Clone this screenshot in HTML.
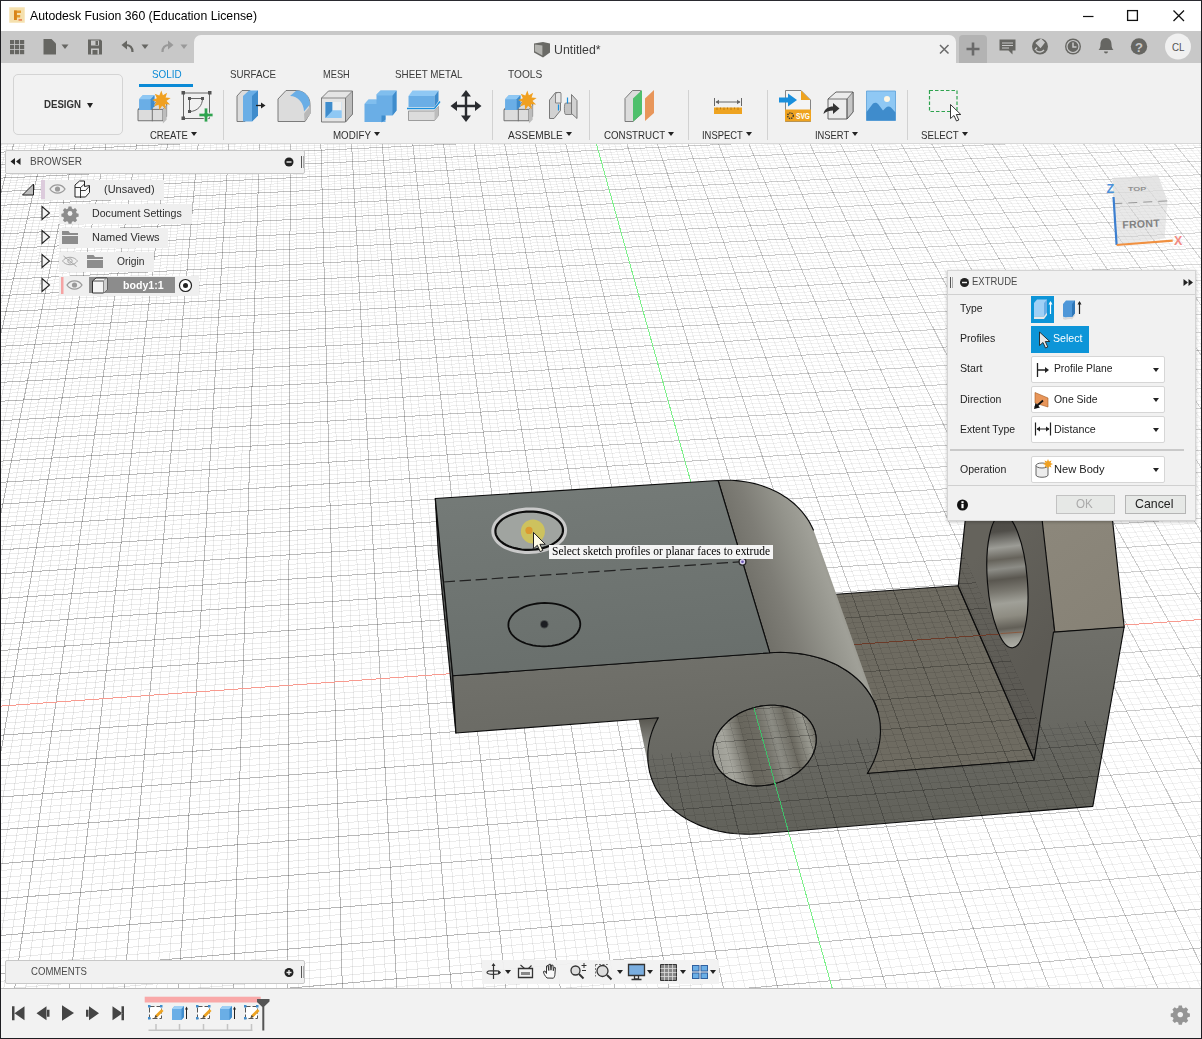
<!DOCTYPE html>
<html><head><meta charset="utf-8"><title>Autodesk Fusion 360 (Education License)</title>
<style>
*{box-sizing:border-box;margin:0;padding:0}
html,body{width:1202px;height:1039px;overflow:hidden;background:#fff}
body{position:relative;font-family:"Liberation Sans",sans-serif;color:#333;font-size:12px}
.abs{position:absolute}
#frame{position:absolute;left:0;top:0;width:1202px;height:1039px;border:1px solid #1e1e22;border-top-color:#2a2a30;z-index:50;pointer-events:none}
#title{position:absolute;left:1px;top:1px;width:1200px;height:30px;background:#fff}
#title .t{position:absolute;left:29px;top:7px;font-size:13.3px;color:#000;letter-spacing:-0.02px;white-space:nowrap}
#qat{position:absolute;left:1px;top:31px;width:1200px;height:32px;background:#c8c8c8}
#tab{position:absolute;left:193px;top:4px;width:762px;height:28px;background:#f1f1f1;border-radius:7px 7px 0 0}
#tab .n{position:absolute;left:360.5px;top:7px;font-size:13px;color:#3c3c3c;white-space:nowrap}
#plus{position:absolute;left:958px;top:4px;width:28px;height:28px;background:#b3b3b3;border-radius:4px 4px 0 0}
#ribbon{position:absolute;left:1px;top:63px;width:1200px;height:81px;background:#f1f1f1;border-bottom:1px solid #d8d8d8}
.rt{position:absolute;top:5px;font-size:12px;color:#3c3c3c;white-space:nowrap;letter-spacing:-0.1px}
.rl{position:absolute;top:66px;font-size:12px;color:#2e2e2e;white-space:nowrap;letter-spacing:-0.1px}
.rl i{display:inline-block;width:0;height:0;border-left:3.5px solid transparent;border-right:3.5px solid transparent;border-top:5px solid #222;margin-left:4px;vertical-align:2px}
.sep{position:absolute;top:27px;width:1px;height:50px;background:#d2d2d2}
#design{position:absolute;left:12px;top:11px;width:110px;height:61px;border:1px solid #d4d4d4;border-radius:5px;background:#f2f2f2}
#design span{position:absolute;left:30px;top:23px;font-size:12px;font-weight:bold;color:#333;letter-spacing:-0.1px;white-space:nowrap}
#design i{position:absolute;left:72.5px;top:27.5px;width:0;height:0;border-left:3.5px solid transparent;border-right:3.5px solid transparent;border-top:5px solid #222}
#canvas{position:absolute;left:1px;top:144px;width:1200px;height:845px;background:#fff;overflow:hidden}
#timeline{position:absolute;left:1px;top:988px;width:1200px;height:50px;background:#f2f2f2;border-top:1px solid #bdbdbd}
.panelhdr{position:absolute;background:#f1f1f1;border:1px solid #c8c8c8;border-radius:2px;font-size:12px;color:#4a4a4a}
.brow{position:absolute;height:20px;background:#efefef;font-size:12px;color:#2d2d2d;white-space:nowrap}
.brow span{position:absolute;top:3px}
#dlg{position:absolute;left:946px;top:126px;width:251px;height:252px;background:#f1f1f1;border:1px solid #d4d4d4;box-shadow:0 1px 3px rgba(0,0,0,.25);font-size:12px;color:#222}
#dlg .lb{position:absolute;left:12px;white-space:nowrap}
#dlg .dd{position:absolute;left:83px;width:134px;height:27px;background:#fff;border:1px solid #d6d6d6;border-radius:2px}
#dlg .dd span{position:absolute;left:22px;top:5px;white-space:nowrap}
#dlg .dd i{position:absolute;right:5.500px;top:11px;width:0;height:0;border-left:3px solid transparent;border-right:3px solid transparent;border-top:4.500px solid #222}
.btn{position:absolute;height:20px;border:1px solid #b5b5b5;background:#e6e8e6;font-size:13px;text-align:center;line-height:18px;color:#222}
svg{position:absolute;left:0;top:0;overflow:visible}
</style></head><body>
<div id="title">
<svg width="30" height="30" style="left:8px;top:6px"><rect x="0" y="0" width="16" height="16" rx="1" fill="#f8e9c4"/><rect x="1" y="1" width="14" height="14" rx="1" fill="#f5e0ae"/><path d="M5 3.500h7v2.600H7.800v2h3.400v2.400H7.800V13H5z" fill="#e39a2c"/><path d="M5 3.500h2.800v9.500H5z" fill="#d98418"/><rect x="9.500" y="12" width="3.500" height="1.800" fill="#e98a5a"/></svg>
<svg width="120" height="30" style="left:1080px;top:0"><path d="M2 15.500h10.500" stroke="#111" stroke-width="1.200"/><rect x="46.6" y="9.6" width="9.8" height="9.8" fill="none" stroke="#111" stroke-width="1.3"/><path d="M92.5 9.5l10.5 10.5M103 9.500l-10.500 10.500" stroke="#111" stroke-width="1.3"/></svg>
</div>
<div id="qat">
<svg width="195" height="32"><g fill="#666662">
<rect x="9" y="9" width="4.200" height="4.200"/><rect x="14" y="9" width="4.200" height="4.200"/><rect x="19" y="9" width="4.200" height="4.200"/>
<rect x="9" y="14" width="4.200" height="4.200"/><rect x="14" y="14" width="4.200" height="4.200"/><rect x="19" y="14" width="4.200" height="4.200"/>
<rect x="9" y="19" width="4.200" height="4.200"/><rect x="14" y="19" width="4.200" height="4.200"/><rect x="19" y="19" width="4.200" height="4.200"/>
<path d="M42.500 8h8l4.500 4.500V23.500H42.500z"/><path d="M60.500 13.500h7l-3.500 4.500z"/>
<path d="M87 8.500h12.500l1.500 1.500V23.500H87z"/></g>
<rect x="90" y="9.500" width="8" height="5" fill="#c8c8c8"/><rect x="94.500" y="10" width="2.500" height="4" fill="#666662"/><rect x="90" y="17.500" width="8" height="6" fill="#c8c8c8"/><rect x="91.500" y="19" width="5" height="4.500" fill="#666662"/>
<path d="M131.500 21c0-5-3-7-7-7h-2" fill="none" stroke="#666662" stroke-width="2.200"/><path d="M126 9.500l-5.500 4.500 5.500 4.500z" fill="#666662"/><path d="M140.500 13.500h7l-3.500 4.500z" fill="#666662"/>
<path d="M161.500 21c0-5 3-7 7-7h2" fill="none" stroke="#999" stroke-width="2.200"/><path d="M167 9.500l5.500 4.500-5.500 4.500z" fill="#999"/><path d="M179.500 13.500h7l-3.500 4.500z" fill="#999"/>
</svg>
<div id="tab">
<svg width="30" height="28" style="left:338px;top:5px"><path d="M2 3.500l9-1.500 7 1.500v9l-7 5-9-5z" fill="#6a6a66"/><path d="M2.800 4.600l7.600 1v10l-7.600-4.400z" fill="#b4b4b0"/></svg>
<svg width="20" height="20" style="left:743px;top:6px"><path d="M3 4l8.500 8.500M11.500 4l-8.500 8.500" stroke="#6a6a6a" stroke-width="1.500"/></svg>
</div>
<div id="plus"><svg width="28" height="28"><path d="M14 7.500v13M7.500 14h13" stroke="#6a6a6a" stroke-width="2.600"/></svg></div>
<svg width="215" height="32" style="left:986px;top:0"><g fill="#666662">
<path d="M12.500 8.500h16v11h-3v4l-4-4h-9z"/>
<circle cx="53" cy="15.500" r="8"/>
<circle cx="86" cy="15.500" r="8"/>
<path d="M119 7c-4 0-5.500 3-5.500 6.500 0 3-1 4.500-2 5.500h15c-1-1-2-2.500-2-5.500 0-3.500-1.500-6.500-5.500-6.500zM117 20.500h4a2 2 0 0 1-4 0z"/>
<circle cx="152" cy="15.500" r="8.200"/></g>
<g stroke="#c8c8c8" stroke-width="1.200"><path d="M15 12h11M15 14.500h11M15 17h7"/></g>
<path d="M49.500 12l4.500-3.500 3 3-3.500 4.500zM50 16.500l-2 2.500" stroke="#c8c8c8" stroke-width="1.500" fill="#c8c8c8"/><path d="M57 19a5.500 5.500 0 0 1-8 .5" stroke="#c8c8c8" stroke-width="1.300" fill="none"/>
<circle cx="86" cy="15.500" r="6" fill="none" stroke="#c8c8c8" stroke-width="1.200"/><path d="M86 11.500v4.500h3.500" stroke="#c8c8c8" stroke-width="1.500" fill="none"/>
<text x="152" y="20.500" font-size="13" font-weight="bold" fill="#c8c8c8" text-anchor="middle" font-family="Liberation Sans, sans-serif">?</text>
<circle cx="191" cy="15.500" r="13" fill="#f0f0f0"/>
<text x="185" y="19.800" font-size="11.500" fill="#555" textLength="12.500" lengthAdjust="spacingAndGlyphs" font-family="Liberation Sans, sans-serif">CL</text>
</svg>
</div>
<div id="ribbon">
<div id="design"><i></i></div>
<div class="abs" style="left:138px;top:21px;width:54px;height:3px;background:#0a8ad6"></div>
<div class="sep" style="left:222px"></div><div class="sep" style="left:491px"></div><div class="sep" style="left:588px"></div><div class="sep" style="left:687px"></div><div class="sep" style="left:766px"></div><div class="sep" style="left:906px"></div>
<svg width="1200" height="81" viewBox="1 63 1200 81">
<defs>
<g id="newcomp"><path d="M0 17.500l4-3.500h9.500l4-3.500h9.500v13.500l-4 4H0z" fill="#dcdcdc" stroke="#6e6e6e" stroke-width=".9"/><path d="M13.500 14v14.500M0 17.500h23.500l3.500-3.500M23.500 17.500v11" fill="none" stroke="#6e6e6e" stroke-width=".9"/><path d="M23.500 17.500l3.500-4v13.500l-3.500 3.500z" fill="#bdbdbd"/><path d="M1 8l3.500-3.500h11v10l-3.500 3.500H1z" fill="#6aaee6"/><path d="M1 8l3.500-3.500h11L12 8z" fill="#8fc8f4"/><path d="M12 8l3.500-3.500v10L12 18z" fill="#3f8ccc"/><path d="M22 0l1.500 4.500 4-2.500-1.500 4.500 4.800.500-4 2.800 3.500 3.200-4.800-.3.800 4.800-3.500-3.300-2.800 3.800-.5-4.800-4.500 1.500 2.500-4-4.200-2 4.500-1.500-2-4.200 4.300 1.700z" fill="#f0a020"/></g>
</defs>
<use href="#newcomp" transform="translate(138 90.500) scale(1.06 1.08)"/>
<g fill="none" stroke="#666" stroke-width="1"><path d="M183.500 93h26v25.500h-26z"/><path d="M189.500 98.500h13c0 7-5 13-13 13z"/></g>
<g fill="#555"><rect x="181.500" y="91" width="3.500" height="3.500"/><rect x="208" y="91" width="3.500" height="3.500"/><rect x="181.500" y="116.500" width="3.500" height="3.500"/><rect x="188" y="97" width="3" height="3"/><rect x="201" y="97" width="3" height="3"/><rect x="188" y="110" width="3" height="3"/></g>
<path d="M199 113.200h5.200v-5.200h3.600v5.200h5.200v3.600h-5.200v5.200h-3.600v-5.200h-5.200z" fill="#2fa34f" stroke="#f1f1f1" stroke-width=".8"/>
<!-- press pull -->
<path d="M237 96l5-5.500h8v25.500l-5 5.500h-8z" fill="#dcdcdc" stroke="#6e6e6e" stroke-width=".9"/><path d="M243 96l6-5.500h9v25l-6 6h-9z" fill="#6aaee6"/><path d="M252 96l6-5.500v25l-6 6z" fill="#3f8ccc"/><path d="M256 105.500h6" stroke="#222" stroke-width="1.300"/><path d="M261 102.500l4.500 3-4.500 3z" fill="#222"/>
<!-- fillet -->
<path d="M278 99l8-8.500h10c8 0 14 6 14 14v9l-5 8h-27z" fill="#dcdcdc" stroke="#6e6e6e" stroke-width=".9"/><path d="M304 113.500l6-7v8l-5.500 7z" fill="#b8b8b8"/><path d="M290 96l6.500-5.500c8 0 13.500 6 13.500 14l-6 7c0-8-6-15.500-14-15.500z" fill="#6aaee6"/>
<!-- shell -->
<path d="M321.500 98l7-7h24v23l-7 8h-24z" fill="#e4e4e4" stroke="#6e6e6e" stroke-width=".9"/><path d="M345.500 98l7-7v23l-7 8z" fill="#bdbdbd" stroke="#6e6e6e" stroke-width=".7"/><path d="M321.500 98h24v24" fill="none" stroke="#6e6e6e" stroke-width=".8"/><path d="M325.500 102h16v16h-16z" fill="#8fc8f4"/><path d="M325.500 102h7v10l-7 6z" fill="#3f8ccc"/><path d="M332.500 102h9v8.500h-9z" fill="#f0f0f0"/><path d="M332.500 110.500h9v7.500h-16z" fill="#8fc8f4"/>
<!-- combine -->
<path d="M364.500 104l4-4.500h8v-5l4-4h16v20l-4 5h-7v6.500h-21z" fill="#6aaee6"/><path d="M392.500 95.500l4-5v20l-4 5zM381.500 115.500h4v4l-4 3z" fill="#3f8ccc"/><path d="M364.500 104l4-4.500h8v-5l4-4h16l-4 5h-16v8.500z" fill="#8fc8f4" opacity=".6"/>
<!-- offset -->
<path d="M408.500 96l4-5.500h26l-4 5.500z" fill="#8fc8f4"/><path d="M408.500 96h26v11h-26z" fill="#6aaee6"/><path d="M434.500 96l4-5.500v10.500l-4 6z" fill="#3f8ccc"/><path d="M408.500 111h26l4-4.500v9l-4 5h-26z" fill="#dcdcdc" stroke="#8a8a8a" stroke-width=".8"/><path d="M434.500 111l4-4.500v9l-4 5z" fill="#bdbdbd"/><path d="M407 108.500h27.500l5.500-7" fill="none" stroke="#1a8fdc" stroke-width="1.400"/>
<!-- move -->
<path d="M466 94v24M454 106h24" stroke="#2a2c30" stroke-width="2.400"/><path d="M466 90l5 6.500h-10zM466 122l5-6.500h-10zM450.500 106l6.500-5v10zM481.500 106l-6.500-5v10z" fill="#2a2c30"/>
<use href="#newcomp" transform="translate(504 90.500) scale(1.06 1.08)"/>
<!-- joint -->
<path d="M549.500 100l6-7.500h5v18l-6.500 8h-4.500z" fill="#d2d2d2" stroke="#6e6e6e" stroke-width=".9"/><path d="M555.500 93.500c2-1.500 5-1.500 5.500 0v9.500h-5.500z" fill="#e6e6e6" stroke="#6e6e6e" stroke-width=".8"/><path d="M571.500 94.500l5.500 6v18l-5.500-5z" fill="#d2d2d2" stroke="#6e6e6e" stroke-width=".9"/><path d="M565.500 103h6v11.500h-6c-1.500-.5-1.500-11 0-11.500z" fill="#c4c4c4" stroke="#6e6e6e" stroke-width=".8"/><path d="M558.500 104.500v6M567.500 97.500v6" stroke="#1a8fdc" stroke-width="1.200"/>
<!-- construct -->
<path d="M625 98.500l7.500-8h8v24l-7.500 7h-8z" fill="#dcdcdc" stroke="#6e6e6e" stroke-width=".9"/><path d="M633 98.500l9-8.500v24l-9 7.500z" fill="#4fc06c"/><path d="M645 98.500l9-8.500v23l-9 8z" fill="#e8965a"/>
<!-- inspect -->
<path d="M714 107.500h28v6.500h-28z" fill="#eea320"/><path d="M717 107.500v2.500M720.500 107.500v1.800M724 107.500v2.500M727.500 107.500v1.800M731 107.500v2.500M734.500 107.500v1.800M738 107.500v2.500" stroke="#b07410" stroke-width=".8"/><path d="M714.500 98v8M741.500 98v8M716 102h24" stroke="#666" stroke-width="1"/><path d="M715.500 102l3.500-2.200v4.400zM740.500 102l-3.500-2.200v4.400z" fill="#666"/>
<!-- insert svg -->
<path d="M785.500 90.500h15.500l9.500 9.500v21.500h-25z" fill="#f4f4f4" stroke="#777" stroke-width=".9"/><path d="M801 90.500l9.500 9.500h-9.500z" fill="#eea320"/><path d="M785 109.500h26v12h-26z" fill="#eea320"/><text x="796" y="119" font-size="8.500" font-weight="bold" fill="#fff" textLength="14" lengthAdjust="spacingAndGlyphs" font-family="Liberation Sans, sans-serif">SVG</text><circle cx="790.500" cy="115.700" r="2.800" fill="none" stroke="#333" stroke-width="1.300" stroke-dasharray="1.400 .9"/><path d="M779 97.500h9v-4l9 6.500-9 6.500v-4h-9z" fill="#1a8fdc"/>
<!-- derive -->
<path d="M828 99l8-7h17v20l-6 7h-19z" fill="#ececec" stroke="#555" stroke-width=".9"/><path d="M847 99l6-7v20l-6 7z" fill="#c6c6c6" stroke="#555" stroke-width=".7"/><path d="M828 99h19v20" fill="none" stroke="#555" stroke-width=".8"/><path d="M823.500 114c1-5.500 5-7.500 9.500-7.500v-3.500l6.500 5.500-6.500 5.500v-3.500c-3.500 0-6.500 .5-9.500 3.500z" fill="#333"/>
<!-- image -->
<path d="M866.500 91h29v29.500h-29z" fill="#8fc8f4"/><path d="M866.500 91h29v29.500h-29z" fill="none" stroke="#5a9fd8" stroke-width=".8"/><path d="M866.500 112l6.500-8.500c2-1.500 4-1 5.500 1l4.500 6 3-3c1.500-1.500 3.500-1.500 5 0l4.500 5v8h-29z" fill="#3f8ccc"/><circle cx="887" cy="99" r="3" fill="#fff7e4"/>
<!-- select -->
<path d="M929.500 90.500h27.500v21h-27.500z" fill="none" stroke="#2fa34f" stroke-width="1.200" stroke-dasharray="3.500 2"/><path d="M950.500 104.500v14l3.500-3 2.500 5.500 2.300-1-2.500-5.500h4.500z" fill="#fff" stroke="#222" stroke-width=".9"/>
</svg>
</div>
<div id="canvas"><svg width="1200" height="845" viewBox="1 144 1200 845">
<defs>
<linearGradient id="gTop" gradientUnits="userSpaceOnUse" x1="600" y1="485" x2="620" y2="670"><stop offset="0" stop-color="#747a77"/><stop offset="1" stop-color="#696f6c"/></linearGradient>
<linearGradient id="gFront" gradientUnits="userSpaceOnUse" x1="700" y1="655" x2="715" y2="835"><stop offset="0" stop-color="#70706a"/><stop offset=".5" stop-color="#696963"/><stop offset="1" stop-color="#62625b"/></linearGradient>
<linearGradient id="gCyl" gradientUnits="userSpaceOnUse" x1="745" y1="585" x2="852" y2="547"><stop offset="0" stop-color="#706f68"/><stop offset=".25" stop-color="#7e7d76"/><stop offset=".52" stop-color="#93938b"/><stop offset=".7" stop-color="#a0a098"/><stop offset=".86" stop-color="#8b897f"/><stop offset="1" stop-color="#77756b"/></linearGradient>
<linearGradient id="gHole" gradientUnits="userSpaceOnUse" x1="712" y1="760" x2="817" y2="731"><stop offset="0" stop-color="#9a9a92"/><stop offset=".16" stop-color="#a6a69e"/><stop offset=".34" stop-color="#68665d"/><stop offset=".48" stop-color="#6e6c63"/><stop offset=".62" stop-color="#8c8c84"/><stop offset=".76" stop-color="#6c6a61"/><stop offset=".9" stop-color="#98988f"/><stop offset="1" stop-color="#6a685f"/></linearGradient>
<linearGradient id="gHole2" gradientUnits="userSpaceOnUse" x1="1005" y1="515" x2="1010" y2="648"><stop offset="0" stop-color="#4c4a45"/><stop offset=".12" stop-color="#504e49"/><stop offset=".24" stop-color="#9c9c96"/><stop offset=".33" stop-color="#66635b"/><stop offset=".4" stop-color="#8c8c86"/><stop offset=".48" stop-color="#5a5750"/><stop offset=".57" stop-color="#7a7870"/><stop offset=".66" stop-color="#a0a098"/><stop offset=".76" stop-color="#8e8c82"/><stop offset=".85" stop-color="#625f57"/><stop offset=".93" stop-color="#9a9a92"/><stop offset="1" stop-color="#b0b0a8"/></linearGradient>
<linearGradient id="gB" gradientUnits="userSpaceOnUse" x1="1050" y1="525" x2="1120" y2="625"><stop offset="0" stop-color="#8c877b"/><stop offset="1" stop-color="#878276"/></linearGradient>
<linearGradient id="gA" gradientUnits="userSpaceOnUse" x1="960" y1="580" x2="1050" y2="640"><stop offset="0" stop-color="#65635c"/><stop offset="1" stop-color="#5c5a54"/></linearGradient>
</defs>
<linearGradient id="gMaj" gradientUnits="userSpaceOnUse" x1="200" y1="900" x2="1100" y2="150"><stop offset="0" stop-color="#000" stop-opacity=".29"/><stop offset=".42" stop-color="#000" stop-opacity=".25"/><stop offset=".85" stop-color="#000" stop-opacity=".19"/><stop offset="1" stop-color="#000" stop-opacity=".16"/></linearGradient>
<linearGradient id="gMin" gradientUnits="userSpaceOnUse" x1="200" y1="900" x2="1100" y2="150"><stop offset="0" stop-color="#000" stop-opacity=".085"/><stop offset=".42" stop-color="#000" stop-opacity=".065"/><stop offset=".85" stop-color="#000" stop-opacity=".05"/><stop offset="1" stop-color="#000" stop-opacity=".045"/></linearGradient>
<g shape-rendering="crispEdges" fill="none" stroke-width="1"><path stroke="url(#gMin)" d="M-3.7 140.0L-5.0 144.8M2.5 140.0L-5.0 167.7M8.6 140.0L-5.0 191.5M20.9 140.0L-5.0 242.5M27.0 140.0L-5.0 269.7M33.1 140.0L-5.0 298.2M39.3 140.0L-5.0 328.1M51.5 140.0L-5.0 392.4M57.6 140.0L-5.0 427.1M63.8 140.0L-5.0 463.6M69.9 140.0L-5.0 502.1M82.2 140.0L-5.0 585.8M88.3 140.0L-5.0 631.3M94.4 140.0L-5.0 679.7M100.6 140.0L-5.0 731.2M112.8 140.0L-5.0 844.6M118.9 140.0L-5.0 907.3M125.1 140.0L-5.0 974.5M131.2 140.0L2.8 995.0M143.4 140.0L24.7 995.0M149.6 140.0L35.7 995.0M155.7 140.0L46.7 995.0M161.8 140.0L57.6 995.0M174.0 140.0L79.6 995.0M180.2 140.0L90.5 995.0M186.3 140.0L101.5 995.0M192.4 140.0L112.5 995.0M204.6 140.0L134.4 995.0M210.8 140.0L145.3 995.0M216.9 140.0L156.3 995.0M223.0 140.0L167.3 995.0M235.2 140.0L189.2 995.0M241.3 140.0L200.1 995.0M247.5 140.0L211.1 995.0M253.6 140.0L222.0 995.0M265.8 140.0L243.9 995.0M271.9 140.0L254.9 995.0M278.0 140.0L265.8 995.0M284.1 140.0L276.8 995.0M296.4 140.0L298.7 995.0M302.5 140.0L309.6 995.0M308.6 140.0L320.6 995.0M314.7 140.0L331.5 995.0M326.9 140.0L353.4 995.0M333.0 140.0L364.4 995.0M339.1 140.0L375.3 995.0M345.2 140.0L386.3 995.0M357.5 140.0L408.1 995.0M363.6 140.0L419.1 995.0M369.7 140.0L430.0 995.0M375.8 140.0L440.9 995.0M388.0 140.0L462.8 995.0M394.1 140.0L473.8 995.0M400.2 140.0L484.7 995.0M406.3 140.0L495.6 995.0M418.5 140.0L517.5 995.0M424.6 140.0L528.4 995.0M430.7 140.0L539.3 995.0M436.8 140.0L550.3 995.0M449.0 140.0L572.1 995.0M455.1 140.0L583.1 995.0M461.2 140.0L594.0 995.0M467.3 140.0L604.9 995.0M479.5 140.0L626.7 995.0M485.6 140.0L637.7 995.0M491.7 140.0L648.6 995.0M497.8 140.0L659.5 995.0M510.0 140.0L681.3 995.0M516.1 140.0L692.3 995.0M522.2 140.0L703.2 995.0M528.3 140.0L714.1 995.0M540.4 140.0L735.9 995.0M546.5 140.0L746.8 995.0M552.6 140.0L757.7 995.0M558.7 140.0L768.7 995.0M570.9 140.0L790.5 995.0M577.0 140.0L801.4 995.0M583.1 140.0L812.3 995.0M589.2 140.0L823.2 995.0M601.3 140.0L845.0 995.0M607.4 140.0L855.9 995.0M613.5 140.0L866.8 995.0M619.6 140.0L877.7 995.0M631.8 140.0L899.5 995.0M637.9 140.0L910.4 995.0M643.9 140.0L921.3 995.0M650.0 140.0L932.2 995.0M662.2 140.0L954.0 995.0M668.3 140.0L964.9 995.0M674.3 140.0L975.8 995.0M680.4 140.0L986.7 995.0M692.6 140.0L1008.5 995.0M698.7 140.0L1019.4 995.0M704.7 140.0L1030.3 995.0M710.8 140.0L1041.1 995.0M723.0 140.0L1062.9 995.0M729.1 140.0L1073.8 995.0M735.1 140.0L1084.7 995.0M741.2 140.0L1095.6 995.0M753.4 140.0L1117.3 995.0M759.4 140.0L1128.2 995.0M765.5 140.0L1139.1 995.0M771.6 140.0L1150.0 995.0M783.7 140.0L1171.7 995.0M789.8 140.0L1182.6 995.0M795.9 140.0L1193.5 995.0M801.9 140.0L1204.4 995.0M814.1 140.0L1207.0 955.3M820.2 140.0L1207.0 933.5M826.2 140.0L1207.0 912.1M832.3 140.0L1207.0 891.3M844.4 140.0L1207.0 850.9M850.5 140.0L1207.0 831.4M856.6 140.0L1207.0 812.3M862.6 140.0L1207.0 793.6M874.8 140.0L1207.0 757.5M880.8 140.0L1207.0 739.9M886.9 140.0L1207.0 722.8M893.0 140.0L1207.0 705.9M905.1 140.0L1207.0 673.3M911.1 140.0L1207.0 657.5M917.2 140.0L1207.0 641.9M923.3 140.0L1207.0 626.7M935.4 140.0L1207.0 597.1M941.5 140.0L1207.0 582.7M947.5 140.0L1207.0 568.6M953.6 140.0L1207.0 554.8M965.7 140.0L1207.0 527.8M971.7 140.0L1207.0 514.7M977.8 140.0L1207.0 501.8M983.9 140.0L1207.0 489.2M996.0 140.0L1207.0 464.5M1002.0 140.0L1207.0 452.5M1008.1 140.0L1207.0 440.7M1014.1 140.0L1207.0 429.1M1026.2 140.0L1207.0 406.5M1032.3 140.0L1207.0 395.5M1038.3 140.0L1207.0 384.6M1044.4 140.0L1207.0 373.9M1056.5 140.0L1207.0 353.1M1062.6 140.0L1207.0 342.9M1068.6 140.0L1207.0 332.9M1074.7 140.0L1207.0 323.0M1086.8 140.0L1207.0 303.8M1092.8 140.0L1207.0 294.4M1098.8 140.0L1207.0 285.1M1104.9 140.0L1207.0 275.9M1117.0 140.0L1207.0 258.1M1123.0 140.0L1207.0 249.4M1129.1 140.0L1207.0 240.7M1135.1 140.0L1207.0 232.3M1147.2 140.0L1207.0 215.7M1153.3 140.0L1207.0 207.5M1159.3 140.0L1207.0 199.5M1165.3 140.0L1207.0 191.6M1177.4 140.0L1207.0 176.2M1183.5 140.0L1207.0 168.6M1189.5 140.0L1207.0 161.1M1195.5 140.0L1207.0 153.7"/><path stroke="url(#gMin)" d="M-5.0 142.4L47.4 140.0M-5.0 144.9L102.6 140.0M-5.0 147.4L157.8 140.0M-5.0 149.9L212.9 140.0M-5.0 155.0L323.0 140.0M-5.0 157.5L378.0 140.0M-5.0 160.1L433.0 140.0M-5.0 162.7L487.9 140.0M-5.0 167.9L597.6 140.0M-5.0 170.5L652.4 140.0M-5.0 173.1L707.2 140.0M-5.0 175.7L761.9 140.0M-5.0 181.1L871.2 140.0M-5.0 183.7L925.9 140.0M-5.0 186.4L980.4 140.0M-5.0 189.1L1034.9 140.0M-5.0 194.6L1143.9 140.0M-5.0 197.3L1198.3 140.0M-5.0 200.1L1207.0 142.2M-5.0 202.8L1207.0 144.8M-5.0 208.4L1207.0 150.0M-5.0 211.2L1207.0 152.7M-5.0 214.1L1207.0 155.4M-5.0 216.9L1207.0 158.0M-5.0 222.6L1207.0 163.4M-5.0 225.5L1207.0 166.1M-5.0 228.4L1207.0 168.8M-5.0 231.3L1207.0 171.6M-5.0 237.2L1207.0 177.1M-5.0 240.1L1207.0 179.9M-5.0 243.1L1207.0 182.7M-5.0 246.1L1207.0 185.5M-5.0 252.1L1207.0 191.1M-5.0 255.1L1207.0 194.0M-5.0 258.1L1207.0 196.9M-5.0 261.2L1207.0 199.7M-5.0 267.4L1207.0 205.6M-5.0 270.5L1207.0 208.5M-5.0 273.6L1207.0 211.4M-5.0 276.7L1207.0 214.4M-5.0 283.0L1207.0 220.3M-5.0 286.2L1207.0 223.3M-5.0 289.4L1207.0 226.3M-5.0 292.7L1207.0 229.4M-5.0 299.2L1207.0 235.5M-5.0 302.4L1207.0 238.6M-5.0 305.7L1207.0 241.7M-5.0 309.0L1207.0 244.8M-5.0 315.7L1207.0 251.1M-5.0 319.0L1207.0 254.2M-5.0 322.4L1207.0 257.4M-5.0 325.8L1207.0 260.6M-5.0 332.7L1207.0 267.1M-5.0 336.1L1207.0 270.3M-5.0 339.6L1207.0 273.6M-5.0 343.1L1207.0 276.9M-5.0 350.1L1207.0 283.5M-5.0 353.6L1207.0 286.8M-5.0 357.2L1207.0 290.2M-5.0 360.8L1207.0 293.6M-5.0 368.0L1207.0 300.4M-5.0 371.7L1207.0 303.8M-5.0 375.3L1207.0 307.2M-5.0 379.0L1207.0 310.7M-5.0 386.5L1207.0 317.7M-5.0 390.2L1207.0 321.2M-5.0 394.0L1207.0 324.8M-5.0 397.8L1207.0 328.4M-5.0 405.4L1207.0 335.6M-5.0 409.3L1207.0 339.2M-5.0 413.1L1207.0 342.9M-5.0 417.0L1207.0 346.5M-5.0 424.9L1207.0 353.9M-5.0 428.9L1207.0 357.7M-5.0 432.9L1207.0 361.4M-5.0 436.9L1207.0 365.2M-5.0 445.0L1207.0 372.8M-5.0 449.1L1207.0 376.7M-5.0 453.2L1207.0 380.6M-5.0 457.3L1207.0 384.5M-5.0 465.7L1207.0 392.3M-5.0 469.9L1207.0 396.3M-5.0 474.1L1207.0 400.3M-5.0 478.4L1207.0 404.3M-5.0 487.0L1207.0 412.4M-5.0 491.3L1207.0 416.5M-5.0 495.7L1207.0 420.6M-5.0 500.1L1207.0 424.7M-5.0 508.9L1207.0 433.1M-5.0 513.4L1207.0 437.3M-5.0 517.9L1207.0 441.5M-5.0 522.4L1207.0 445.8M-5.0 531.6L1207.0 454.4M-5.0 536.2L1207.0 458.7M-5.0 540.8L1207.0 463.1M-5.0 545.5L1207.0 467.5M-5.0 554.9L1207.0 476.4M-5.0 559.7L1207.0 480.9M-5.0 564.5L1207.0 485.4M-5.0 569.3L1207.0 489.9M-5.0 579.0L1207.0 499.1M-5.0 583.9L1207.0 503.7M-5.0 588.9L1207.0 508.4M-5.0 593.9L1207.0 513.1M-5.0 603.9L1207.0 522.5M-5.0 609.0L1207.0 527.3M-5.0 614.1L1207.0 532.1M-5.0 619.3L1207.0 537.0M-5.0 629.7L1207.0 546.8M-5.0 634.9L1207.0 551.7M-5.0 640.2L1207.0 556.7M-5.0 645.5L1207.0 561.7M-5.0 656.2L1207.0 571.8M-5.0 661.7L1207.0 576.9M-5.0 667.1L1207.0 582.1M-5.0 672.6L1207.0 587.3M-5.0 683.8L1207.0 597.7M-5.0 689.4L1207.0 603.0M-5.0 695.0L1207.0 608.3M-5.0 700.7L1207.0 613.7M-5.0 712.2L1207.0 624.5M-5.0 718.1L1207.0 630.0M-5.0 723.9L1207.0 635.5M-5.0 729.8L1207.0 641.1M-5.0 741.7L1207.0 652.3M-5.0 747.8L1207.0 658.0M-5.0 753.8L1207.0 663.7M-5.0 759.9L1207.0 669.5M-5.0 772.3L1207.0 681.1M-5.0 778.5L1207.0 687.0M-5.0 784.8L1207.0 692.9M-5.0 791.2L1207.0 698.9M-5.0 804.0L1207.0 710.9M-5.0 810.5L1207.0 717.0M-5.0 817.0L1207.0 723.2M-5.0 823.6L1207.0 729.4M-5.0 836.9L1207.0 741.9M-5.0 843.6L1207.0 748.2M-5.0 850.4L1207.0 754.6M-5.0 857.2L1207.0 761.1M-5.0 871.0L1207.0 774.1M-5.0 878.0L1207.0 780.7M-5.0 885.0L1207.0 787.3M-5.0 892.1L1207.0 794.0M-5.0 906.5L1207.0 807.5M-5.0 913.8L1207.0 814.3M-5.0 921.1L1207.0 821.2M-5.0 928.5L1207.0 828.2M-5.0 943.4L1207.0 842.2M-5.0 950.9L1207.0 849.4M-5.0 958.6L1207.0 856.5M-5.0 966.2L1207.0 863.8M-5.0 981.8L1207.0 878.4M-5.0 989.7L1207.0 885.8M25.1 995.0L1207.0 893.3M117.5 995.0L1207.0 900.8M302.1 995.0L1207.0 916.1M394.3 995.0L1207.0 923.8M486.5 995.0L1207.0 931.6M578.6 995.0L1207.0 939.4M762.6 995.0L1207.0 955.3M854.5 995.0L1207.0 963.4M946.3 995.0L1207.0 971.5M1038.1 995.0L1207.0 979.7"/><path stroke="url(#gMaj)" d="M14.7 140.0L-5.0 216.4M45.4 140.0L-5.0 359.5M76.0 140.0L-5.0 542.7M106.7 140.0L-5.0 786.1M137.3 140.0L13.7 995.0M167.9 140.0L68.6 995.0M198.5 140.0L123.4 995.0M229.1 140.0L178.2 995.0M259.7 140.0L233.0 995.0M290.3 140.0L287.7 995.0M320.8 140.0L342.5 995.0M351.4 140.0L397.2 995.0M381.9 140.0L451.9 995.0M412.4 140.0L506.6 995.0M442.9 140.0L561.2 995.0M473.4 140.0L615.8 995.0M503.9 140.0L670.4 995.0M534.4 140.0L725.0 995.0M564.8 140.0L779.6 995.0M625.7 140.0L888.6 995.0M656.1 140.0L943.1 995.0M686.5 140.0L997.6 995.0M716.9 140.0L1052.0 995.0M747.3 140.0L1106.5 995.0M777.7 140.0L1160.9 995.0M808.0 140.0L1207.0 977.7M838.4 140.0L1207.0 870.9M868.7 140.0L1207.0 775.4M899.0 140.0L1207.0 689.4M929.3 140.0L1207.0 611.8M959.6 140.0L1207.0 541.2M989.9 140.0L1207.0 476.7M1020.2 140.0L1207.0 417.7M1050.5 140.0L1207.0 363.4M1080.7 140.0L1207.0 313.3M1110.9 140.0L1207.0 267.0M1141.2 140.0L1207.0 223.9M1171.4 140.0L1207.0 183.8M1201.6 140.0L1207.0 146.4"/><path stroke="url(#gMaj)" d="M-5.0 152.4L268.0 140.0M-5.0 165.2L542.8 140.0M-5.0 178.4L816.6 140.0M-5.0 191.8L1089.4 140.0M-5.0 205.6L1207.0 147.4M-5.0 219.7L1207.0 160.7M-5.0 234.2L1207.0 174.3M-5.0 249.1L1207.0 188.3M-5.0 264.3L1207.0 202.6M-5.0 279.9L1207.0 217.3M-5.0 295.9L1207.0 232.4M-5.0 312.3L1207.0 247.9M-5.0 329.2L1207.0 263.8M-5.0 346.6L1207.0 280.2M-5.0 364.4L1207.0 296.9M-5.0 382.7L1207.0 314.2M-5.0 401.6L1207.0 332.0M-5.0 421.0L1207.0 350.2M-5.0 440.9L1207.0 369.0M-5.0 461.5L1207.0 388.4M-5.0 482.7L1207.0 408.3M-5.0 504.5L1207.0 428.9M-5.0 527.0L1207.0 450.1M-5.0 550.2L1207.0 471.9M-5.0 574.1L1207.0 494.5M-5.0 598.9L1207.0 517.8M-5.0 624.4L1207.0 541.9M-5.0 650.9L1207.0 566.7M-5.0 678.2L1207.0 592.5M-5.0 735.7L1207.0 646.7M-5.0 766.1L1207.0 675.3M-5.0 797.5L1207.0 704.9M-5.0 830.2L1207.0 735.6M-5.0 864.1L1207.0 767.5M-5.0 899.3L1207.0 800.7M-5.0 935.9L1207.0 835.2M-5.0 974.0L1207.0 871.1M209.9 995.0L1207.0 908.4M670.6 995.0L1207.0 947.4M1129.8 995.0L1207.0 988.0"/><path stroke="#f79a8f" d="M-5.0 706.5L1207.0 619.1"/><path stroke="#7cf08a" d="M595.3 140.0L834.1 995.0"/></g>
<path d="M807.7 596.3L958.0 585.8L1034.2 760.2L867.3 773.5Z" fill="#6e6b61" stroke="#0c0c0c" stroke-width="1.15" stroke-linejoin="round"/>
<path d="M966.3 510.0L1042.3 510.0L1054.8 632.3L1034.4 760.2L958.3 585.9Z" fill="url(#gA)" stroke="#0c0c0c" stroke-width="1.15" stroke-linejoin="round"/>
<path d="M1041.0 510.0L1111.4 510.0L1124.2 627.2L1054.8 632.3Z" fill="url(#gB)" stroke="#0c0c0c" stroke-width="1.15" stroke-linejoin="round"/>
<ellipse cx="1007.4" cy="581" rx="20" ry="67" transform="rotate(-4.5 1007.4 581)" fill="url(#gHole2)" stroke="#0c0c0c" stroke-width="1.15" stroke-linejoin="round"/>
<path d="M1000.5 633.6L1022.5 632" stroke="#8a5a40" stroke-width="1"/>
<path d="M435.3 498.5L452.8 675.8L455.9 733.0L438.3 552.6Z" fill="#5a5d5b" stroke="#0c0c0c" stroke-width="1.15" stroke-linejoin="round"/>
<linearGradient id="gSl" gradientUnits="userSpaceOnUse" x1="650" y1="716" x2="650" y2="800"><stop offset="0" stop-color="#55534c"/><stop offset=".35" stop-color="#8a8a84"/><stop offset="1" stop-color="#c4c4be"/></linearGradient>
<path d="M619.1 540.6L617.0 545.0L615.2 549.5L613.6 554.0L612.4 558.6L611.4 563.1L610.7 567.7L610.3 572.3L610.2 576.8L610.4 581.3L610.9 585.8L611.7 590.2L649.2 770.0L648.4 765.4L647.9 760.7L647.8 756.0L648.0 751.2L648.5 746.4L649.3 741.6L650.4 736.7L651.9 731.9L653.7 727.1L655.8 722.4L658.3 717.7Z" fill="url(#gSl)" stroke="none"/>
<path d="M452.8 675.8L769.8 652.8L769.8 652.8L773.9 652.5L777.9 652.4L781.9 652.4L785.8 652.5L789.8 652.7L793.7 653.0L797.6 653.4L801.4 653.9L805.2 654.5L808.9 655.3L812.6 656.1L816.2 657.0L819.8 658.1L823.3 659.2L826.7 660.5L830.0 661.8L833.3 663.3L836.5 664.8L839.6 666.4L842.5 668.1L845.4 669.9L848.3 671.8L851.0 673.8L853.5 675.8L856.0 677.9L858.4 680.1L860.7 682.4L862.8 684.7L864.9 687.1L866.8 689.6L868.6 692.1L870.3 694.7L871.8 697.3L873.3 700.0L874.6 702.7L875.7 705.5L876.8 708.3L877.7 711.2L878.5 714.0L879.1 716.9L879.7 719.9L880.1 722.8L880.3 725.8L880.4 728.8L880.5 731.8L880.3 734.9L880.1 737.9L879.7 740.9L879.2 743.9L878.5 747.0L877.8 750.0L876.9 753.0L875.8 756.0L874.7 759.0L873.5 761.9L872.1 764.8L870.6 767.8L869.0 770.6L867.3 773.5L1034.2 760.2L1053.5 632.1L1124.1 627.0L1092.8 806.4L759.8 833.7L759.8 833.7L756.0 833.9L752.3 834.1L748.5 834.2L744.7 834.1L741.0 834.0L737.3 833.8L733.6 833.5L730.0 833.1L726.4 832.6L722.8 831.9L719.3 831.3L715.8 830.5L712.4 829.6L709.0 828.6L705.6 827.5L702.4 826.4L699.2 825.1L696.1 823.8L693.0 822.3L690.0 820.8L687.1 819.2L684.3 817.5L681.5 815.8L678.9 813.9L676.3 812.0L673.8 810.0L671.4 807.9L669.2 805.8L667.0 803.5L664.9 801.3L663.0 798.9L661.1 796.5L659.4 794.0L657.7 791.5L656.2 788.9L654.8 786.2L653.6 783.5L652.4 780.8L651.4 778.0L650.5 775.1L649.7 772.3L649.1 769.4L648.6 766.4L648.2 763.4L647.9 760.4L647.8 757.4L647.8 754.4L647.9 751.3L648.2 748.3L648.6 745.2L649.2 742.1L649.8 739.0L650.7 735.9L651.6 732.9L652.7 729.8L653.9 726.7L655.2 723.7L656.7 720.7L658.3 717.7L455.9 733.0ZM816.1 742.1L816.2 738.6L815.8 735.1L815.1 731.7L813.9 728.4L812.4 725.2L810.5 722.2L808.2 719.4L805.6 716.7L802.6 714.3L799.4 712.2L795.8 710.3L792.0 708.7L788.0 707.4L783.8 706.4L779.4 705.7L775.0 705.3L770.4 705.2L765.8 705.5L761.1 706.1L756.5 707.0L752.0 708.2L747.5 709.7L743.2 711.5L739.1 713.6L735.2 715.9L731.5 718.5L728.1 721.3L725.0 724.3L722.2 727.4L719.7 730.7L717.6 734.1L715.9 737.6L714.5 741.2L713.6 744.7L713.1 748.3L712.9 751.9L713.2 755.4L713.9 758.8L714.9 762.1L716.4 765.3L718.2 768.3L720.4 771.1L722.9 773.8L725.8 776.2L728.9 778.4L732.3 780.3L736.0 781.9L739.8 783.3L743.9 784.4L748.1 785.2L752.4 785.7L756.9 785.9L761.3 785.7L765.8 785.3L770.3 784.6L774.8 783.5L779.2 782.2L783.4 780.6L787.5 778.7L791.5 776.6L795.2 774.2L798.7 771.7L802.0 768.9L804.9 765.9L807.6 762.8L809.9 759.5L811.9 756.2L813.5 752.7L814.8 749.2L815.6 745.7L816.1 742.1Z" fill="url(#gFront)" fill-rule="evenodd" stroke="#0c0c0c" stroke-width="1.15" stroke-linejoin="round"/>
<path d="M816.1 742.1L816.2 738.6L815.8 735.1L815.1 731.7L813.9 728.4L812.4 725.2L810.5 722.2L808.2 719.4L805.6 716.7L802.6 714.3L799.4 712.2L795.8 710.3L792.0 708.7L788.0 707.4L783.8 706.4L779.4 705.7L775.0 705.3L770.4 705.2L765.8 705.5L761.1 706.1L756.5 707.0L752.0 708.2L747.5 709.7L743.2 711.5L739.1 713.6L735.2 715.9L731.5 718.5L728.1 721.3L725.0 724.3L722.2 727.4L719.7 730.7L717.6 734.1L715.9 737.6L714.5 741.2L713.6 744.7L713.1 748.3L712.9 751.9L713.2 755.4L713.9 758.8L714.9 762.1L716.4 765.3L718.2 768.3L720.4 771.1L722.9 773.8L725.8 776.2L728.9 778.4L732.3 780.3L736.0 781.9L739.8 783.3L743.9 784.4L748.1 785.2L752.4 785.7L756.9 785.9L761.3 785.7L765.8 785.3L770.3 784.6L774.8 783.5L779.2 782.2L783.4 780.6L787.5 778.7L791.5 776.6L795.2 774.2L798.7 771.7L802.0 768.9L804.9 765.9L807.6 762.8L809.9 759.5L811.9 756.2L813.5 752.7L814.8 749.2L815.6 745.7L816.1 742.1Z" fill="url(#gHole)" stroke="#0c0c0c" stroke-width="1.15" stroke-linejoin="round"/>
<path d="M718.1 480.5L718.1 480.5L722.7 480.2L727.3 480.2L731.8 480.3L736.3 480.6L740.7 481.1L745.1 481.7L749.5 482.5L753.7 483.4L757.9 484.5L762.0 485.8L766.0 487.2L769.9 488.7L773.7 490.4L777.4 492.3L781.0 494.3L784.4 496.4L787.7 498.6L790.8 501.0L793.9 503.5L796.7 506.1L799.4 508.8L801.9 511.7L804.3 514.6L806.5 517.6L808.6 520.7L810.4 523.9L812.1 527.2L813.6 530.5L814.9 533.9L876.6 707.8L875.2 704.3L873.6 700.8L871.9 697.4L869.9 694.0L867.7 690.8L865.3 687.6L862.7 684.6L860.0 681.6L857.0 678.8L853.9 676.1L850.6 673.5L847.1 671.0L843.5 668.7L839.7 666.5L835.8 664.4L831.7 662.5L827.5 660.8L823.2 659.2L818.7 657.8L814.2 656.5L809.5 655.4L804.8 654.5L800.0 653.7L795.1 653.1L790.1 652.7L785.1 652.4L780.0 652.4L774.9 652.5L769.8 652.8Z" fill="url(#gCyl)" stroke="none"/>
<path d="M718.1 480.5L718.1 480.5L722.7 480.2L727.3 480.2L731.8 480.3L736.3 480.6L740.7 481.1L745.1 481.7L749.5 482.5L753.7 483.4L757.9 484.5L762.0 485.8L766.0 487.2L769.9 488.7L773.7 490.4L777.4 492.3L781.0 494.3L784.4 496.4L787.7 498.6L790.8 501.0L793.9 503.5L796.7 506.1L799.4 508.8L801.9 511.7L804.3 514.6L806.5 517.6L808.6 520.7L810.4 523.9L812.1 527.2L813.6 530.5" fill="none" stroke="#0c0c0c" stroke-width="1.15" stroke-linejoin="round"/>
<path d="M718.1 480.5L769.8 652.8L769.8 652.8L775.2 652.5L780.5 652.4L785.7 652.5L790.9 652.7L796.1 653.2L801.2 653.9L806.2 654.7L811.1 655.7L815.9 657.0L820.6 658.3L825.2 659.9L829.7 661.7L834.0 663.6L838.1 665.6L842.1 667.9L846.0 670.2L849.6 672.8L853.1 675.4L856.4 678.2L859.5 681.2L862.4 684.2L865.1 687.4L867.6 690.7L869.9 694.1L872.0 697.6L873.8 701.1L875.4 704.8L876.8 708.5L878.0 712.3" fill="none" stroke="#0c0c0c" stroke-width="1.15" stroke-linejoin="round"/>
<path d="M435.3 498.5L718.1 480.5L769.8 652.8L452.8 675.8Z" fill="url(#gTop)" stroke="#0c0c0c" stroke-width="1.15" stroke-linejoin="round"/>
<mask id="mk" maskUnits="userSpaceOnUse" x="0" y="140" width="1202" height="860"><rect x="0" y="140" width="1202" height="860" fill="#000"/>
<path d="M807.7 596.3L958.0 585.8L1034.2 760.2L867.3 773.5Z" fill="#fff"/>
<path d="M966.3 510.0L1042.3 510.0L1054.8 632.3L1034.4 760.2L958.3 585.9Z" fill="#fff"/>
<path d="M452.8 675.8L769.8 652.8L769.8 652.8L773.9 652.5L777.9 652.4L781.9 652.4L785.8 652.5L789.8 652.7L793.7 653.0L797.6 653.4L801.4 653.9L805.2 654.5L808.9 655.3L812.6 656.1L816.2 657.0L819.8 658.1L823.3 659.2L826.7 660.5L830.0 661.8L833.3 663.3L836.5 664.8L839.6 666.4L842.5 668.1L845.4 669.9L848.3 671.8L851.0 673.8L853.5 675.8L856.0 677.9L858.4 680.1L860.7 682.4L862.8 684.7L864.9 687.1L866.8 689.6L868.6 692.1L870.3 694.7L871.8 697.3L873.3 700.0L874.6 702.7L875.7 705.5L876.8 708.3L877.7 711.2L878.5 714.0L879.1 716.9L879.7 719.9L880.1 722.8L880.3 725.8L880.4 728.8L880.5 731.8L880.3 734.9L880.1 737.9L879.7 740.9L879.2 743.9L878.5 747.0L877.8 750.0L876.9 753.0L875.8 756.0L874.7 759.0L873.5 761.9L872.1 764.8L870.6 767.8L869.0 770.6L867.3 773.5L1034.2 760.2L1053.5 632.1L1124.1 627.0L1092.8 806.4L759.8 833.7L759.8 833.7L756.0 833.9L752.3 834.1L748.5 834.2L744.7 834.1L741.0 834.0L737.3 833.8L733.6 833.5L730.0 833.1L726.4 832.6L722.8 831.9L719.3 831.3L715.8 830.5L712.4 829.6L709.0 828.6L705.6 827.5L702.4 826.4L699.2 825.1L696.1 823.8L693.0 822.3L690.0 820.8L687.1 819.2L684.3 817.5L681.5 815.8L678.9 813.9L676.3 812.0L673.8 810.0L671.4 807.9L669.2 805.8L667.0 803.5L664.9 801.3L663.0 798.9L661.1 796.5L659.4 794.0L657.7 791.5L656.2 788.9L654.8 786.2L653.6 783.5L652.4 780.8L651.4 778.0L650.5 775.1L649.7 772.3L649.1 769.4L648.6 766.4L648.2 763.4L647.9 760.4L647.8 757.4L647.8 754.4L647.9 751.3L648.2 748.3L648.6 745.2L649.2 742.1L649.8 739.0L650.7 735.9L651.6 732.9L652.7 729.8L653.9 726.7L655.2 723.7L656.7 720.7L658.3 717.7L455.9 733.0Z" fill="#fff"/>
<path d="M966.3 510.0L1042.3 510.0L1054.8 632.3L1039.5 724.8L961.9 552.0Z" fill="#000"/>
<path d="M452.8 675.8L769.8 652.8L769.8 652.8L774.7 652.5L779.5 652.4L784.2 652.4L789.0 652.6L793.7 653.0L798.3 653.5L802.9 654.1L807.4 654.9L811.8 655.9L816.2 657.0L820.4 658.3L824.6 659.7L828.7 661.2L832.6 662.9L836.4 664.8L840.1 666.7L843.7 668.8L847.1 671.0L850.4 673.3L853.5 675.7L856.5 678.3L859.3 681.0L861.9 683.7L864.4 686.6L866.7 689.5L868.9 692.5L870.9 695.6L872.7 698.8L874.3 702.1L875.7 705.4L876.9 708.8L878.0 712.2L878.9 715.7L879.5 719.2L880.0 722.7L880.3 726.3L880.5 729.9L880.4 733.5L880.1 737.1L647.8 755.1L647.8 753.2L648.0 751.2L648.1 749.2L648.3 747.2L648.6 745.3L649.0 743.3L649.3 741.3L649.8 739.3L650.3 737.3L650.8 735.3L651.4 733.3L652.1 731.4L652.8 729.4L653.6 727.4L654.4 725.4L655.3 723.5L656.2 721.5L657.2 719.6L658.3 717.7L455.9 733.0Z" fill="#000"/>
<path d="M1039.5 724.8L1053.5 632.1L1124.1 627.0L1107.9 719.5Z" fill="#000"/>
<path d="M718.1 480.5L718.1 480.5L722.7 480.2L727.3 480.2L731.8 480.3L736.3 480.6L740.7 481.1L745.1 481.7L749.5 482.5L753.7 483.4L757.9 484.5L762.0 485.8L766.0 487.2L769.9 488.7L773.7 490.4L777.4 492.3L781.0 494.3L784.4 496.4L787.7 498.6L790.8 501.0L793.9 503.5L796.7 506.1L799.4 508.8L801.9 511.7L804.3 514.6L806.5 517.6L808.6 520.7L810.4 523.9L812.1 527.2L813.6 530.5L814.9 533.9L876.6 707.8L875.2 704.3L873.6 700.8L871.9 697.4L869.9 694.0L867.7 690.8L865.3 687.6L862.7 684.6L860.0 681.6L857.0 678.8L853.9 676.1L850.6 673.5L847.1 671.0L843.5 668.7L839.7 666.5L835.8 664.4L831.7 662.5L827.5 660.8L823.2 659.2L818.7 657.8L814.2 656.5L809.5 655.4L804.8 654.5L800.0 653.7L795.1 653.1L790.1 652.7L785.1 652.4L780.0 652.4L774.9 652.5L769.8 652.8Z" fill="#000"/>
<path d="M435.3 498.5L718.1 480.5L769.8 652.8L452.8 675.8Z" fill="#000"/>
<path d="M816.1 742.1L816.2 738.6L815.8 735.1L815.1 731.7L813.9 728.4L812.4 725.2L810.5 722.2L808.2 719.4L805.6 716.7L802.6 714.3L799.4 712.2L795.8 710.3L792.0 708.7L788.0 707.4L783.8 706.4L779.4 705.7L775.0 705.3L770.4 705.2L765.8 705.5L761.1 706.1L756.5 707.0L752.0 708.2L747.5 709.7L743.2 711.5L739.1 713.6L735.2 715.9L731.5 718.5L728.1 721.3L725.0 724.3L722.2 727.4L719.7 730.7L717.6 734.1L715.9 737.6L714.5 741.2L713.6 744.7L713.1 748.3L712.9 751.9L713.2 755.4L713.9 758.8L714.9 762.1L716.4 765.3L718.2 768.3L720.4 771.1L722.9 773.8L725.8 776.2L728.9 778.4L732.3 780.3L736.0 781.9L739.8 783.3L743.9 784.4L748.1 785.2L752.4 785.7L756.9 785.9L761.3 785.7L765.8 785.3L770.3 784.6L774.8 783.5L779.2 782.2L783.4 780.6L787.5 778.7L791.5 776.6L795.2 774.2L798.7 771.7L802.0 768.9L804.9 765.9L807.6 762.8L809.9 759.5L811.9 756.2L813.5 752.7L814.8 749.2L815.6 745.7L816.1 742.1Z" fill="#fff"/>
</mask>
<g mask="url(#mk)" shape-rendering="crispEdges" fill="none" stroke-width="1"><path stroke="rgba(0,0,0,.08)" d="M-3.7 140.0L-5.0 144.8M2.5 140.0L-5.0 167.7M8.6 140.0L-5.0 191.5M20.9 140.0L-5.0 242.5M27.0 140.0L-5.0 269.7M33.1 140.0L-5.0 298.2M39.3 140.0L-5.0 328.1M51.5 140.0L-5.0 392.4M57.6 140.0L-5.0 427.1M63.8 140.0L-5.0 463.6M69.9 140.0L-5.0 502.1M82.2 140.0L-5.0 585.8M88.3 140.0L-5.0 631.3M94.4 140.0L-5.0 679.7M100.6 140.0L-5.0 731.2M112.8 140.0L-5.0 844.6M118.9 140.0L-5.0 907.3M125.1 140.0L-5.0 974.5M131.2 140.0L2.8 995.0M143.4 140.0L24.7 995.0M149.6 140.0L35.7 995.0M155.7 140.0L46.7 995.0M161.8 140.0L57.6 995.0M174.0 140.0L79.6 995.0M180.2 140.0L90.5 995.0M186.3 140.0L101.5 995.0M192.4 140.0L112.5 995.0M204.6 140.0L134.4 995.0M210.8 140.0L145.3 995.0M216.9 140.0L156.3 995.0M223.0 140.0L167.3 995.0M235.2 140.0L189.2 995.0M241.3 140.0L200.1 995.0M247.5 140.0L211.1 995.0M253.6 140.0L222.0 995.0M265.8 140.0L243.9 995.0M271.9 140.0L254.9 995.0M278.0 140.0L265.8 995.0M284.1 140.0L276.8 995.0M296.4 140.0L298.7 995.0M302.5 140.0L309.6 995.0M308.6 140.0L320.6 995.0M314.7 140.0L331.5 995.0M326.9 140.0L353.4 995.0M333.0 140.0L364.4 995.0M339.1 140.0L375.3 995.0M345.2 140.0L386.3 995.0M357.5 140.0L408.1 995.0M363.6 140.0L419.1 995.0M369.7 140.0L430.0 995.0M375.8 140.0L440.9 995.0M388.0 140.0L462.8 995.0M394.1 140.0L473.8 995.0M400.2 140.0L484.7 995.0M406.3 140.0L495.6 995.0M418.5 140.0L517.5 995.0M424.6 140.0L528.4 995.0M430.7 140.0L539.3 995.0M436.8 140.0L550.3 995.0M449.0 140.0L572.1 995.0M455.1 140.0L583.1 995.0M461.2 140.0L594.0 995.0M467.3 140.0L604.9 995.0M479.5 140.0L626.7 995.0M485.6 140.0L637.7 995.0M491.7 140.0L648.6 995.0M497.8 140.0L659.5 995.0M510.0 140.0L681.3 995.0M516.1 140.0L692.3 995.0M522.2 140.0L703.2 995.0M528.3 140.0L714.1 995.0M540.4 140.0L735.9 995.0M546.5 140.0L746.8 995.0M552.6 140.0L757.7 995.0M558.7 140.0L768.7 995.0M570.9 140.0L790.5 995.0M577.0 140.0L801.4 995.0M583.1 140.0L812.3 995.0M589.2 140.0L823.2 995.0M601.3 140.0L845.0 995.0M607.4 140.0L855.9 995.0M613.5 140.0L866.8 995.0M619.6 140.0L877.7 995.0M631.8 140.0L899.5 995.0M637.9 140.0L910.4 995.0M643.9 140.0L921.3 995.0M650.0 140.0L932.2 995.0M662.2 140.0L954.0 995.0M668.3 140.0L964.9 995.0M674.3 140.0L975.8 995.0M680.4 140.0L986.7 995.0M692.6 140.0L1008.5 995.0M698.7 140.0L1019.4 995.0M704.7 140.0L1030.3 995.0M710.8 140.0L1041.1 995.0M723.0 140.0L1062.9 995.0M729.1 140.0L1073.8 995.0M735.1 140.0L1084.7 995.0M741.2 140.0L1095.6 995.0M753.4 140.0L1117.3 995.0M759.4 140.0L1128.2 995.0M765.5 140.0L1139.1 995.0M771.6 140.0L1150.0 995.0M783.7 140.0L1171.7 995.0M789.8 140.0L1182.6 995.0M795.9 140.0L1193.5 995.0M801.9 140.0L1204.4 995.0M814.1 140.0L1207.0 955.3M820.2 140.0L1207.0 933.5M826.2 140.0L1207.0 912.1M832.3 140.0L1207.0 891.3M844.4 140.0L1207.0 850.9M850.5 140.0L1207.0 831.4M856.6 140.0L1207.0 812.3M862.6 140.0L1207.0 793.6M874.8 140.0L1207.0 757.5M880.8 140.0L1207.0 739.9M886.9 140.0L1207.0 722.8M893.0 140.0L1207.0 705.9M905.1 140.0L1207.0 673.3M911.1 140.0L1207.0 657.5M917.2 140.0L1207.0 641.9M923.3 140.0L1207.0 626.7M935.4 140.0L1207.0 597.1M941.5 140.0L1207.0 582.7M947.5 140.0L1207.0 568.6M953.6 140.0L1207.0 554.8M965.7 140.0L1207.0 527.8M971.7 140.0L1207.0 514.7M977.8 140.0L1207.0 501.8M983.9 140.0L1207.0 489.2M996.0 140.0L1207.0 464.5M1002.0 140.0L1207.0 452.5M1008.1 140.0L1207.0 440.7M1014.1 140.0L1207.0 429.1M1026.2 140.0L1207.0 406.5M1032.3 140.0L1207.0 395.5M1038.3 140.0L1207.0 384.6M1044.4 140.0L1207.0 373.9M1056.5 140.0L1207.0 353.1M1062.6 140.0L1207.0 342.9M1068.6 140.0L1207.0 332.9M1074.7 140.0L1207.0 323.0M1086.8 140.0L1207.0 303.8M1092.8 140.0L1207.0 294.4M1098.8 140.0L1207.0 285.1M1104.9 140.0L1207.0 275.9M1117.0 140.0L1207.0 258.1M1123.0 140.0L1207.0 249.4M1129.1 140.0L1207.0 240.7M1135.1 140.0L1207.0 232.3M1147.2 140.0L1207.0 215.7M1153.3 140.0L1207.0 207.5M1159.3 140.0L1207.0 199.5M1165.3 140.0L1207.0 191.6M1177.4 140.0L1207.0 176.2M1183.5 140.0L1207.0 168.6M1189.5 140.0L1207.0 161.1M1195.5 140.0L1207.0 153.7"/><path stroke="rgba(0,0,0,.08)" d="M-5.0 142.4L47.4 140.0M-5.0 144.9L102.6 140.0M-5.0 147.4L157.8 140.0M-5.0 149.9L212.9 140.0M-5.0 155.0L323.0 140.0M-5.0 157.5L378.0 140.0M-5.0 160.1L433.0 140.0M-5.0 162.7L487.9 140.0M-5.0 167.9L597.6 140.0M-5.0 170.5L652.4 140.0M-5.0 173.1L707.2 140.0M-5.0 175.7L761.9 140.0M-5.0 181.1L871.2 140.0M-5.0 183.7L925.9 140.0M-5.0 186.4L980.4 140.0M-5.0 189.1L1034.9 140.0M-5.0 194.6L1143.9 140.0M-5.0 197.3L1198.3 140.0M-5.0 200.1L1207.0 142.2M-5.0 202.8L1207.0 144.8M-5.0 208.4L1207.0 150.0M-5.0 211.2L1207.0 152.7M-5.0 214.1L1207.0 155.4M-5.0 216.9L1207.0 158.0M-5.0 222.6L1207.0 163.4M-5.0 225.5L1207.0 166.1M-5.0 228.4L1207.0 168.8M-5.0 231.3L1207.0 171.6M-5.0 237.2L1207.0 177.1M-5.0 240.1L1207.0 179.9M-5.0 243.1L1207.0 182.7M-5.0 246.1L1207.0 185.5M-5.0 252.1L1207.0 191.1M-5.0 255.1L1207.0 194.0M-5.0 258.1L1207.0 196.9M-5.0 261.2L1207.0 199.7M-5.0 267.4L1207.0 205.6M-5.0 270.5L1207.0 208.5M-5.0 273.6L1207.0 211.4M-5.0 276.7L1207.0 214.4M-5.0 283.0L1207.0 220.3M-5.0 286.2L1207.0 223.3M-5.0 289.4L1207.0 226.3M-5.0 292.7L1207.0 229.4M-5.0 299.2L1207.0 235.5M-5.0 302.4L1207.0 238.6M-5.0 305.7L1207.0 241.7M-5.0 309.0L1207.0 244.8M-5.0 315.7L1207.0 251.1M-5.0 319.0L1207.0 254.2M-5.0 322.4L1207.0 257.4M-5.0 325.8L1207.0 260.6M-5.0 332.7L1207.0 267.1M-5.0 336.1L1207.0 270.3M-5.0 339.6L1207.0 273.6M-5.0 343.1L1207.0 276.9M-5.0 350.1L1207.0 283.5M-5.0 353.6L1207.0 286.8M-5.0 357.2L1207.0 290.2M-5.0 360.8L1207.0 293.6M-5.0 368.0L1207.0 300.4M-5.0 371.7L1207.0 303.8M-5.0 375.3L1207.0 307.2M-5.0 379.0L1207.0 310.7M-5.0 386.5L1207.0 317.7M-5.0 390.2L1207.0 321.2M-5.0 394.0L1207.0 324.8M-5.0 397.8L1207.0 328.4M-5.0 405.4L1207.0 335.6M-5.0 409.3L1207.0 339.2M-5.0 413.1L1207.0 342.9M-5.0 417.0L1207.0 346.5M-5.0 424.9L1207.0 353.9M-5.0 428.9L1207.0 357.7M-5.0 432.9L1207.0 361.4M-5.0 436.9L1207.0 365.2M-5.0 445.0L1207.0 372.8M-5.0 449.1L1207.0 376.7M-5.0 453.2L1207.0 380.6M-5.0 457.3L1207.0 384.5M-5.0 465.7L1207.0 392.3M-5.0 469.9L1207.0 396.3M-5.0 474.1L1207.0 400.3M-5.0 478.4L1207.0 404.3M-5.0 487.0L1207.0 412.4M-5.0 491.3L1207.0 416.5M-5.0 495.7L1207.0 420.6M-5.0 500.1L1207.0 424.7M-5.0 508.9L1207.0 433.1M-5.0 513.4L1207.0 437.3M-5.0 517.9L1207.0 441.5M-5.0 522.4L1207.0 445.8M-5.0 531.6L1207.0 454.4M-5.0 536.2L1207.0 458.7M-5.0 540.8L1207.0 463.1M-5.0 545.5L1207.0 467.5M-5.0 554.9L1207.0 476.4M-5.0 559.7L1207.0 480.9M-5.0 564.5L1207.0 485.4M-5.0 569.3L1207.0 489.9M-5.0 579.0L1207.0 499.1M-5.0 583.9L1207.0 503.7M-5.0 588.9L1207.0 508.4M-5.0 593.9L1207.0 513.1M-5.0 603.9L1207.0 522.5M-5.0 609.0L1207.0 527.3M-5.0 614.1L1207.0 532.1M-5.0 619.3L1207.0 537.0M-5.0 629.7L1207.0 546.8M-5.0 634.9L1207.0 551.7M-5.0 640.2L1207.0 556.7M-5.0 645.5L1207.0 561.7M-5.0 656.2L1207.0 571.8M-5.0 661.7L1207.0 576.9M-5.0 667.1L1207.0 582.1M-5.0 672.6L1207.0 587.3M-5.0 683.8L1207.0 597.7M-5.0 689.4L1207.0 603.0M-5.0 695.0L1207.0 608.3M-5.0 700.7L1207.0 613.7M-5.0 712.2L1207.0 624.5M-5.0 718.1L1207.0 630.0M-5.0 723.9L1207.0 635.5M-5.0 729.8L1207.0 641.1M-5.0 741.7L1207.0 652.3M-5.0 747.8L1207.0 658.0M-5.0 753.8L1207.0 663.7M-5.0 759.9L1207.0 669.5M-5.0 772.3L1207.0 681.1M-5.0 778.5L1207.0 687.0M-5.0 784.8L1207.0 692.9M-5.0 791.2L1207.0 698.9M-5.0 804.0L1207.0 710.9M-5.0 810.5L1207.0 717.0M-5.0 817.0L1207.0 723.2M-5.0 823.6L1207.0 729.4M-5.0 836.9L1207.0 741.9M-5.0 843.6L1207.0 748.2M-5.0 850.4L1207.0 754.6M-5.0 857.2L1207.0 761.1M-5.0 871.0L1207.0 774.1M-5.0 878.0L1207.0 780.7M-5.0 885.0L1207.0 787.3M-5.0 892.1L1207.0 794.0M-5.0 906.5L1207.0 807.5M-5.0 913.8L1207.0 814.3M-5.0 921.1L1207.0 821.2M-5.0 928.5L1207.0 828.2M-5.0 943.4L1207.0 842.2M-5.0 950.9L1207.0 849.4M-5.0 958.6L1207.0 856.5M-5.0 966.2L1207.0 863.8M-5.0 981.8L1207.0 878.4M-5.0 989.7L1207.0 885.8M25.1 995.0L1207.0 893.3M117.5 995.0L1207.0 900.8M302.1 995.0L1207.0 916.1M394.3 995.0L1207.0 923.8M486.5 995.0L1207.0 931.6M578.6 995.0L1207.0 939.4M762.6 995.0L1207.0 955.3M854.5 995.0L1207.0 963.4M946.3 995.0L1207.0 971.5M1038.1 995.0L1207.0 979.7"/><path stroke="rgba(0,0,0,.24)" d="M14.7 140.0L-5.0 216.4M45.4 140.0L-5.0 359.5M76.0 140.0L-5.0 542.7M106.7 140.0L-5.0 786.1M137.3 140.0L13.7 995.0M167.9 140.0L68.6 995.0M198.5 140.0L123.4 995.0M229.1 140.0L178.2 995.0M259.7 140.0L233.0 995.0M290.3 140.0L287.7 995.0M320.8 140.0L342.5 995.0M351.4 140.0L397.2 995.0M381.9 140.0L451.9 995.0M412.4 140.0L506.6 995.0M442.9 140.0L561.2 995.0M473.4 140.0L615.8 995.0M503.9 140.0L670.4 995.0M534.4 140.0L725.0 995.0M564.8 140.0L779.6 995.0M625.7 140.0L888.6 995.0M656.1 140.0L943.1 995.0M686.5 140.0L997.6 995.0M716.9 140.0L1052.0 995.0M747.3 140.0L1106.5 995.0M777.7 140.0L1160.9 995.0M808.0 140.0L1207.0 977.7M838.4 140.0L1207.0 870.9M868.7 140.0L1207.0 775.4M899.0 140.0L1207.0 689.4M929.3 140.0L1207.0 611.8M959.6 140.0L1207.0 541.2M989.9 140.0L1207.0 476.7M1020.2 140.0L1207.0 417.7M1050.5 140.0L1207.0 363.4M1080.7 140.0L1207.0 313.3M1110.9 140.0L1207.0 267.0M1141.2 140.0L1207.0 223.9M1171.4 140.0L1207.0 183.8M1201.6 140.0L1207.0 146.4"/><path stroke="rgba(0,0,0,.24)" d="M-5.0 152.4L268.0 140.0M-5.0 165.2L542.8 140.0M-5.0 178.4L816.6 140.0M-5.0 191.8L1089.4 140.0M-5.0 205.6L1207.0 147.4M-5.0 219.7L1207.0 160.7M-5.0 234.2L1207.0 174.3M-5.0 249.1L1207.0 188.3M-5.0 264.3L1207.0 202.6M-5.0 279.9L1207.0 217.3M-5.0 295.9L1207.0 232.4M-5.0 312.3L1207.0 247.9M-5.0 329.2L1207.0 263.8M-5.0 346.6L1207.0 280.2M-5.0 364.4L1207.0 296.9M-5.0 382.7L1207.0 314.2M-5.0 401.6L1207.0 332.0M-5.0 421.0L1207.0 350.2M-5.0 440.9L1207.0 369.0M-5.0 461.5L1207.0 388.4M-5.0 482.7L1207.0 408.3M-5.0 504.5L1207.0 428.9M-5.0 527.0L1207.0 450.1M-5.0 550.2L1207.0 471.9M-5.0 574.1L1207.0 494.5M-5.0 598.9L1207.0 517.8M-5.0 624.4L1207.0 541.9M-5.0 650.9L1207.0 566.7M-5.0 678.2L1207.0 592.5M-5.0 735.7L1207.0 646.7M-5.0 766.1L1207.0 675.3M-5.0 797.5L1207.0 704.9M-5.0 830.2L1207.0 735.6M-5.0 864.1L1207.0 767.5M-5.0 899.3L1207.0 800.7M-5.0 935.9L1207.0 835.2M-5.0 974.0L1207.0 871.1M209.9 995.0L1207.0 908.4M670.6 995.0L1207.0 947.4M1129.8 995.0L1207.0 988.0"/><path stroke="#6b3a28" d="M-5.0 706.5L1207.0 619.1"/><path stroke="#3fc06a" d="M595.3 140.0L834.1 995.0"/></g>
<path d="M562.8 528.2L563.0 530.2L562.8 532.2L562.3 534.2L561.3 536.2L560.1 538.1L558.4 539.9L556.5 541.6L554.2 543.2L551.7 544.7L548.9 546.0L545.9 547.1L542.7 548.1L539.3 548.8L535.9 549.4L532.3 549.7L528.7 549.8L525.2 549.8L521.6 549.5L518.2 548.9L514.9 548.2L511.7 547.3L508.7 546.2L506.0 545.0L503.5 543.5L501.4 542.0L499.5 540.3L498.0 538.5L496.8 536.6L495.9 534.6L495.5 532.7L495.4 530.6L495.7 528.6L496.3 526.7L497.3 524.7L498.7 522.9L500.4 521.1L502.3 519.4L504.6 517.9L507.2 516.5L509.9 515.2L512.9 514.1L516.1 513.2L519.3 512.5L522.7 512.0L526.2 511.7L529.7 511.5L533.2 511.6L536.6 511.9L540.0 512.4L543.2 513.1L546.3 513.9L549.3 515.0L552.0 516.2L554.4 517.6L556.6 519.1L558.5 520.8L560.1 522.5L561.4 524.3L562.3 526.3Z" fill="none" stroke="#c9c9c9" stroke-width="8.2"/>
<path d="M562.8 528.2L563.0 530.2L562.8 532.2L562.3 534.2L561.3 536.2L560.1 538.1L558.4 539.9L556.5 541.6L554.2 543.2L551.7 544.7L548.9 546.0L545.9 547.1L542.7 548.1L539.3 548.8L535.9 549.4L532.3 549.7L528.7 549.8L525.2 549.8L521.6 549.5L518.2 548.9L514.9 548.2L511.7 547.3L508.7 546.2L506.0 545.0L503.5 543.5L501.4 542.0L499.5 540.3L498.0 538.5L496.8 536.6L495.9 534.6L495.5 532.7L495.4 530.6L495.7 528.6L496.3 526.7L497.3 524.7L498.7 522.9L500.4 521.1L502.3 519.4L504.6 517.9L507.2 516.5L509.9 515.2L512.9 514.1L516.1 513.2L519.3 512.5L522.7 512.0L526.2 511.7L529.7 511.5L533.2 511.6L536.6 511.9L540.0 512.4L543.2 513.1L546.3 513.9L549.3 515.0L552.0 516.2L554.4 517.6L556.6 519.1L558.5 520.8L560.1 522.5L561.4 524.3L562.3 526.3Z" fill="#a0a4a0" stroke="#0c0c0c" stroke-width="2.2"/>
<path d="M580.1 621.8L580.3 624.1L580.1 626.4L579.5 628.6L578.6 630.8L577.3 633.0L575.5 635.0L573.5 637.0L571.1 638.8L568.4 640.4L565.5 641.9L562.3 643.2L558.9 644.3L555.3 645.2L551.6 645.8L547.9 646.2L544.0 646.3L540.2 646.2L536.5 645.9L532.8 645.3L529.3 644.5L525.9 643.5L522.7 642.2L519.8 640.8L517.2 639.2L514.8 637.4L512.8 635.5L511.2 633.5L509.9 631.3L509.0 629.1L508.5 626.9L508.4 624.6L508.6 622.3L509.3 620.1L510.4 617.9L511.8 615.8L513.5 613.8L515.6 611.9L518.0 610.2L520.7 608.6L523.7 607.1L526.8 605.9L530.2 604.9L533.6 604.1L537.2 603.5L540.9 603.1L544.6 603.0L548.3 603.1L552.0 603.4L555.6 603.9L559.0 604.7L562.4 605.7L565.5 606.9L568.4 608.2L571.0 609.8L573.4 611.5L575.4 613.4L577.1 615.3L578.5 617.4L579.5 619.6Z" fill="none" stroke="#0c0c0c" stroke-width="1.8"/>
<circle cx="544.3" cy="624.3" r="4.3" fill="#1c1e22" opacity=".45"/><circle cx="544.3" cy="624.3" r="3.3" fill="#1c1e22"/>
<path d="M443.5 582.0L742.5 561.7" stroke="#222" stroke-width="1.2" stroke-dasharray="11.5 4.6" fill="none"/>
<circle cx="742.5" cy="561.7" r="3.4" fill="#d8d0f0" stroke="#222" stroke-width="1.3"/><circle cx="742.5" cy="561.7" r="1.3" fill="#6a55b0"/>
<circle cx="532.900" cy="531.600" r="12" fill="#ebd732" opacity=".6"/><circle cx="529" cy="530.400" r="3.600" fill="#dc9a30"/>
<path d="M533.500 532.400v16.400l3.800-3.500 2.900 6.300 2.600-1.200-2.900-6.100h5.400z" fill="#fffbe6" stroke="#222" stroke-width="1"/>
</svg>
<div style="position:absolute;left:548px;top:400.500px;width:224px;height:14px;background:#f4f4f4;font-family:'Liberation Serif',serif;font-size:12px;line-height:15px;color:#000;white-space:nowrap;padding-left:3px"></div>
<svg width="1200" height="845" viewBox="1 144 1200 845">
<path d="M1112.400 178L1158 175.300L1167.400 200.900L1164.600 238.600L1116.600 245.100L1113.300 203.700Z" fill="rgba(212,212,212,.5)"/>
<path d="M1112.400 178L1158 175.300L1167.400 200.900L1113.300 203.700Z" fill="rgba(225,225,225,.5)"/>
<path d="M1113.300 203.700L1167.400 200.900" stroke="#999" stroke-width="1" stroke-dasharray="9 6" fill="none"/>
<path d="M1113.500 197L1116.600 245" stroke="#3c7fd0" stroke-width="2.200"/><path d="M1116.600 245L1172.700 240.600" stroke="#f09040" stroke-width="2.200"/>
<text x="1106.500" y="193" font-size="12.500" font-weight="bold" fill="#4a90d9" font-family="Liberation Sans, sans-serif">Z</text>
<text x="1174" y="245" font-size="12.500" font-weight="bold" fill="#f28b82" font-family="Liberation Sans, sans-serif">X</text>
<text transform="translate(1128 190.500) scale(1 .6)" font-size="9" font-weight="bold" fill="#929292" font-family="Liberation Sans, sans-serif">TOP</text>
<text transform="translate(1122.500 228.500) rotate(-3)" font-size="10.500" font-weight="bold" fill="#828282" letter-spacing=".3" font-family="Liberation Sans, sans-serif">FRONT</text>
</svg>
</div><!-- browser -->
<div class="panelhdr" style="left:5px;top:150px;width:300px;height:24px">
<svg width="300" height="24"><path d="M9.500 10.500l-4.500 0 0 0zM9 7l-4.500 3.500 4.500 3.500zM14.500 7l-4.500 3.500 4.500 3.500z" fill="#222"/><circle cx="283" cy="11" r="4.500" fill="#222"/><path d="M280.500 11h5" stroke="#f1f1f1" stroke-width="1.400"/><path d="M295.500 5v12" stroke="#555" stroke-width="1"/><path d="M297.500 5v12" stroke="#aaa" stroke-width="1"/></svg>
</div>
<div class="brow" style="left:41px;top:180px;width:123px"></div>
<div class="brow" style="left:59px;top:204px;width:133px"></div>
<div class="brow" style="left:59px;top:228px;width:109px"></div>
<div class="brow" style="left:59px;top:252px;width:95px"></div>
<div class="brow" style="left:59px;top:276px;width:140px"></div>
<div class="abs" style="left:89px;top:277px;width:86px;height:16px;background:#8c8c8c"></div>
<svg width="320" height="160" viewBox="0 145 320 160" style="left:0;top:145px">
<path d="M22.500 195h11v-11z" fill="#bdbdbd" stroke="#222" stroke-width="1"/>
<g fill="#f4f4f4" stroke="#222" stroke-width="1.100"><path d="M42 206.500v13l7.500-6.500z"/><path d="M42 230.500v13l7.500-6.500z"/><path d="M42 254.500v13l7.500-6.500z"/><path d="M42 278.500v13l7.500-6.500z"/></g>
<rect x="41" y="180" width="4" height="19" fill="#dccbdc"/>
<rect x="61" y="277" width="2.500" height="17" fill="#f5a3a3"/>
<g fill="none" stroke="#9a9a9a" stroke-width="1.300"><path d="M50 189c3.500-5.500 11.500-5.500 15 0-3.500 5.500-11.500 5.500-15 0z"/><path d="M67 285c3.500-5.500 11.500-5.500 15 0-3.500 5.500-11.500 5.500-15 0z"/></g>
<circle cx="57.500" cy="189" r="2.600" fill="#9a9a9a"/><circle cx="74.500" cy="285" r="2.600" fill="#9a9a9a"/>
<path d="M62.500 261c3.500-5 11.500-5 15 0-3.500 5-11.500 5-15 0z" fill="none" stroke="#a8a8a8" stroke-width="1"/><circle cx="70" cy="261" r="2.200" fill="none" stroke="#a8a8a8"/><path d="M63.500 256l13 10.500" stroke="#a8a8a8" stroke-width="1"/>
<path d="M75 185l4.500-4h5v5.500l5-1v7l-4 4.500h-10.500z" fill="#fafafa" stroke="#222" stroke-width="1"/><path d="M75 187.500h5.500l3.500 -3M80.500 187.500v10.500M80.500 190.500h5l4-4.500" fill="none" stroke="#222" stroke-width=".9"/>
<g transform="translate(70 213.500) scale(.86) translate(-70 -213.500)"><path d="M68.300 205.500h3.400l.5 2.300 1.700.7 2-1.300 2.400 2.400-1.300 2 .7 1.700 2.300.5v3.400l-2.300.5-.7 1.700 1.300 2-2.400 2.400-2-1.300-1.700.7-.5 2.300h-3.400l-.5-2.300-1.700-.7-2 1.300-2.400-2.400 1.300-2-.7-1.700-2.300-.5v-3.400l2.300-.5.700-1.700-1.300-2 2.400-2.400 2 1.300 1.700-.7z" fill="#8c8c8c"/><circle cx="70" cy="213.500" r="2.800" fill="#f0f0f0"/></g>
<g fill="#8c8c8c"><path d="M62 231h6.500l1.500 2h8v2h-16zM62 236h16v8h-16z"/><path d="M87 255h6.500l1.500 2h8v2h-16zM87 260h16v8h-16z"/></g>
<path d="M92.500 281l3.500-3h11v11.500l-3.500 3.500h-11z" fill="#f4f4f4" stroke="#333" stroke-width="1"/><path d="M92.500 281h11v12M103.500 281l3.500-3" fill="none" stroke="#333" stroke-width=".9"/><path d="M103.500 281l3.500-3v11.500l-3.500 3.500z" fill="#d0d0d0"/>
<circle cx="185.500" cy="285.500" r="6" fill="#fff" stroke="#222" stroke-width="1.200"/><circle cx="185.500" cy="285.500" r="2.500" fill="#222"/>
</svg>
<!-- dialog -->
<div id="dlg" style="left:947px;top:269.500px;width:249px;height:251.500px">
<div class="abs" style="left:0;top:23px;width:247px;height:1px;background:#d0d0d0"></div>
<svg width="247" height="24"><path d="M2.500 6v11" stroke="#555"/><path d="M4.500 6v11" stroke="#aaa"/><circle cx="16.500" cy="11.500" r="4.500" fill="#222"/><path d="M14 11.500h5" stroke="#f1f1f1" stroke-width="1.400"/><path d="M235.500 8l4.500 3.500-4.500 3.500zM240.500 8l4.500 3.500-4.500 3.500z" fill="#222"/></svg>
<div class="abs" style="left:83px;top:25px;width:23px;height:27.500px;background:#0d95d8"></div>
<div class="abs" style="left:83px;top:55.500px;width:58px;height:27px;background:#0d95d8"></div>
<div class="dd" style="top:85px"><i></i></div>
<div class="dd" style="top:115px"><i></i></div>
<div class="dd" style="top:145px"><i></i></div>
<div class="abs" style="left:2px;top:178px;width:234px;height:2px;background:#c9c9c9"></div>
<div class="dd" style="top:185px"><i></i></div>
<div class="abs" style="left:0;top:214px;width:247px;height:1px;background:#d0d0d0"></div>
<div class="btn" style="left:108px;top:224.500px;width:59px;height:19px;border-color:#c2c2c2"></div>
<div class="btn" style="left:177px;top:224.500px;width:61px;height:19px"></div>
<svg width="249" height="251">
<path d="M86 32l3-3.500h10v13l-3 4h-10z" fill="#9fd0f6"/><path d="M96 32l3-3.500v13l-3 4z" fill="#6aaee6"/><path d="M86 45.500h10l3-4v2.500l-3 4h-10z" fill="#e8e8e8"/><path d="M102.500 31v12" stroke="#fff" stroke-width="1.200"/><path d="M100.500 33.500l2-3.500 2 3.500z" fill="#fff"/>
<path d="M115 33l3-3.500h9v13l-3 4c-3-1.500-6 1.500-9-1z" fill="#4f97d8"/><path d="M124 33l3-3.500v13l-3 4z" fill="#2f77b8"/><path d="M115 46c3 2 6-1 9 .500l3-4v2l-3 4c-3-1.500-6 1.500-9-.5z" fill="#d8d8d8"/><path d="M131.500 31v12" stroke="#222" stroke-width="1.200"/><path d="M129.500 33.500l2-3.500 2 3.500z" fill="#222"/>
<path d="M91.500 61v13.500l3.500-3 2.500 5.500 2.300-1-2.500-5.500h4.500z" fill="#e8e8e8" stroke="#222" stroke-width=".9"/>
<path d="M89.500 92v14M90 99h8" stroke="#222" stroke-width="1.300"/><path d="M97 96l4 3-4 3z" fill="#222"/>
<path d="M87 121.500l13 5.500v9l-13 -4z" fill="#e8965a" stroke="#a55a20" stroke-width=".6"/><path d="M87 136.500l8-7" stroke="#111" stroke-width="1.800"/><path d="M86 138l1.500-6 4.500 4.500z" fill="#111"/>
<path d="M87.500 151.500v13M102.500 151.500v13M89 158h12" stroke="#222" stroke-width="1.200"/><path d="M88.500 158l3.500-2.500v5zM101.500 158l-3.500-2.500v5z" fill="#222"/>
<path d="M88 194.500v9.500c0 3 12 3 12 0v-9.500" fill="#ececec" stroke="#555" stroke-width=".9"/><ellipse cx="94" cy="194.500" rx="6" ry="2.500" fill="#f8f8f8" stroke="#555" stroke-width=".9"/><path d="M100 188l1 2.500 2.500-1-1 2.500 2.500 1-2.500 1 1 2.500-2.500-1-1 2.500-1-2.500-2.500 1 1-2.500-2.500-1 2.500-1-1-2.500 2.500 1z" fill="#f0a020"/>
<circle cx="14.500" cy="234" r="5.500" fill="#111"/><rect x="13.400" y="232.800" width="2.200" height="4.400" fill="#fff"/><rect x="13.400" y="230.200" width="2.200" height="1.800" fill="#fff"/>
</svg>
</div>
<!-- nav bar -->
<div class="abs" style="left:482px;top:960px;width:237px;height:24px;background:rgba(241,241,241,.96)"></div>
<svg width="240" height="24" viewBox="484 960 240 24" style="left:484px;top:960px">
<g fill="none" stroke="#333" stroke-width="1.200"><path d="M493.500 964v15M487 972.500c0 2.500 13 2.500 13 0s-13-2.500-13 0"/></g><path d="M491.500 966l2-3 2 3zM498 970.500l3 2-3 2z" fill="#333"/><path d="M505 970h6l-3 4z" fill="#222"/>
<path d="M518.500 968.500h14v9h-14z" fill="none" stroke="#333" stroke-width="1.300"/><path d="M520.500 965l4 3.500h4l3-3" fill="none" stroke="#333" stroke-width="1.100"/><path d="M521 972h9v3h-9z" fill="#888"/>
<path d="M547 978c-2-2-3.500-4.500-3.500-6.500l1.500-.5 1.500 2.500v-7.500l1.500-.5.800 5v-6l1.600-.3.600 6 .5-5.200 1.500.2.300 5.500.8-3.500 1.300.5-.5 7c0 1.500-1 3-1.500 3.500z" fill="#f8f8f8" stroke="#333" stroke-width="1"/>
<circle cx="575.500" cy="970.500" r="4.500" fill="#ddd" stroke="#333" stroke-width="1.300"/><path d="M579 974l4.500 4.500" stroke="#333" stroke-width="2"/><path d="M581.500 965.500h5M584 963v5M582 970.500h4" stroke="#333" stroke-width="1"/>
<circle cx="602.500" cy="971" r="5.500" fill="#ddd" stroke="#333" stroke-width="1.300"/><path d="M607 975l4.500 4.500" stroke="#333" stroke-width="2"/><path d="M595.500 964.500h12v2M595.500 964.500v12" fill="none" stroke="#555" stroke-width=".8" stroke-dasharray="2 1.500"/><path d="M617 970h6l-3 4z" fill="#222"/>
<path d="M628.500 964.500h16v11h-16z" fill="#7aaee0" stroke="#333" stroke-width="1.300"/><path d="M634.500 976v3h4v-3M631.500 979.500h10" stroke="#333" stroke-width="1.300" fill="none"/><path d="M647 970h6l-3 4z" fill="#222"/>
<path d="M660.500 964.500h16v16h-16z" fill="#888" stroke="#333" stroke-width="1"/><path d="M664.500 964.500v16M668.500 964.500v16M672.500 964.500v16M660.500 968.500h16M660.500 972.500h16M660.500 976.500h16" stroke="#ddd" stroke-width=".8"/><path d="M680 970h6l-3 4z" fill="#222"/>
<g fill="#6aaee6" stroke="#2f5f9f" stroke-width="1"><rect x="692.500" y="965.500" width="6.500" height="5.500"/><rect x="701" y="965.500" width="6.500" height="5.500"/><rect x="692.500" y="973" width="6.500" height="5.500"/><rect x="701" y="973" width="6.500" height="5.500"/></g><path d="M710 970h6l-3 4z" fill="#222"/>
</svg>
<!-- comments -->
<div class="panelhdr" style="left:5px;top:960px;width:300px;height:24px">
<svg width="300" height="24"><circle cx="283" cy="11.500" r="4.500" fill="#222"/><path d="M280.500 11.500h5M283 9v5" stroke="#f1f1f1" stroke-width="1.300"/><path d="M295.500 5v12" stroke="#555" stroke-width="1"/><path d="M297.500 5v12" stroke="#aaa" stroke-width="1"/></svg>
</div>
<!-- timeline -->
<div id="timeline">
<svg width="1200" height="50" viewBox="1 988 1200 50">
<g fill="#454545" transform="translate(0 -.7)"><path d="M12 1006h2.500v14h-2.500zM24.500 1006v14l-10-7z"/><path d="M46.500 1006v14l-10-7zM47 1009.500h2.500v7h-2.500z"/><path d="M62 1005v15.500l12-7.750z"/><path d="M89 1006v14l10-7zM86 1009.500h2.500v7h-2.500z"/><path d="M112.500 1006v14l10-7zM121.500 1006h2.500v14h-2.500z"/></g>
<rect x="144.700" y="995.700" width="116" height="5.800" fill="#f9a8a8"/>
<path d="M156 1023v6M179.500 1023v6M203.500 1023v6M227.500 1023v6M251.500 1023v6M148.500 1029.200h104" fill="none" stroke="#c4c4c4" stroke-width="1.500"/>
<g id="tsk"><path d="M149.500 1005.500h12v12h-12z" fill="#fff" stroke="#555" stroke-width="1" stroke-dasharray="5 2"/><g fill="#3f8ccc"><rect x="148" y="1004" width="2.500" height="2.500"/><rect x="160" y="1004" width="2.500" height="2.500"/><rect x="148" y="1016" width="2.500" height="2.500"/></g><path d="M154.500 1017l1-3 6-6 2 2-6 6z" fill="#eea320"/><path d="M154.500 1017l1-3 2 2z" fill="#444"/></g>
<use href="#tsk" x="48"/><use href="#tsk" x="96"/>
<g id="tex"><path d="M172 1008l2.500-3h9.500v11l-2.500 3h-9.500z" fill="#6aaee6"/><path d="M172 1008l2.500-3h9.500l-2.500 3z" fill="#9fd0f6"/><path d="M181.500 1008l2.500-3v11l-2.500 3z" fill="#3f8ccc"/><path d="M186.500 1007v11" stroke="#222" stroke-width="1"/><path d="M185 1008.500l1.500-3 1.500 3z" fill="#222"/></g>
<use href="#tex" x="48"/>
<path d="M257 998h12.500v2.500l-5.200 5v24h-2v-23.500l-5.300-5z" fill="#555"/>
<path d="M1178.700 1004.500h3.200l.5 2.200 1.600.7 1.900-1.200 2.300 2.300-1.200 1.900.7 1.600 2.200.5v3.200l-2.200.5-.7 1.600 1.200 1.900-2.300 2.300-1.900-1.200-1.600.7-.5 2.200h-3.200l-.5-2.200-1.600-.7-1.900 1.200-2.300-2.300 1.200-1.900-.7-1.600-2.200-.5v-3.200l2.200-.5.700-1.600-1.200-1.900 2.300-2.300 1.900 1.200 1.600-.7z" fill="#959595"/><circle cx="1180.300" cy="1013.600" r="2.700" fill="#f2f2f2"/>
</svg>
</div>
<i style="position:absolute;left:191.1px;top:132px;border-left:3.5px solid transparent;border-right:3.5px solid transparent;border-top:4.5px solid #222"></i><i style="position:absolute;left:373.7px;top:132px;border-left:3.5px solid transparent;border-right:3.5px solid transparent;border-top:4.5px solid #222"></i><i style="position:absolute;left:565.5px;top:132px;border-left:3.5px solid transparent;border-right:3.5px solid transparent;border-top:4.5px solid #222"></i><i style="position:absolute;left:667.5px;top:132px;border-left:3.5px solid transparent;border-right:3.5px solid transparent;border-top:4.5px solid #222"></i><i style="position:absolute;left:745.5px;top:132px;border-left:3.5px solid transparent;border-right:3.5px solid transparent;border-top:4.5px solid #222"></i><i style="position:absolute;left:851.5px;top:132px;border-left:3.5px solid transparent;border-right:3.5px solid transparent;border-top:4.5px solid #222"></i><i style="position:absolute;left:961.5px;top:132px;border-left:3.5px solid transparent;border-right:3.5px solid transparent;border-top:4.5px solid #222"></i><span style="position:absolute;left:30.0px;top:10.1px;font:normal 12.6px/1 'Liberation Sans',sans-serif;color:#000;white-space:nowrap;transform:scaleX(0.9737);transform-origin:0 0">Autodesk Fusion 360 (Education License)</span>
<span style="position:absolute;left:553.7px;top:43.9px;font:normal 12.6px/1 'Liberation Sans',sans-serif;color:#3c3c3c;white-space:nowrap;transform:scaleX(0.9790);transform-origin:0 0">Untitled*</span>
<span style="position:absolute;left:151.5px;top:68.6px;font:normal 11.8px/1 'Liberation Sans',sans-serif;color:#0a8ad6;white-space:nowrap;transform:scaleX(0.8389);transform-origin:0 0">SOLID</span>
<span style="position:absolute;left:229.5px;top:68.6px;font:normal 11.8px/1 'Liberation Sans',sans-serif;color:#3a3a3a;white-space:nowrap;transform:scaleX(0.8274);transform-origin:0 0">SURFACE</span>
<span style="position:absolute;left:322.5px;top:68.6px;font:normal 11.8px/1 'Liberation Sans',sans-serif;color:#3a3a3a;white-space:nowrap;transform:scaleX(0.7863);transform-origin:0 0">MESH</span>
<span style="position:absolute;left:395.1px;top:68.6px;font:normal 11.8px/1 'Liberation Sans',sans-serif;color:#3a3a3a;white-space:nowrap;transform:scaleX(0.8339);transform-origin:0 0">SHEET METAL</span>
<span style="position:absolute;left:508.2px;top:68.6px;font:normal 11.8px/1 'Liberation Sans',sans-serif;color:#3a3a3a;white-space:nowrap;transform:scaleX(0.8624);transform-origin:0 0">TOOLS</span>
<span style="position:absolute;left:43.5px;top:98.9px;font:bold 11.8px/1 'Liberation Sans',sans-serif;color:#333;white-space:nowrap;transform:scaleX(0.8181);transform-origin:0 0">DESIGN</span>
<span style="position:absolute;left:150.4px;top:129.5px;font:normal 11.8px/1 'Liberation Sans',sans-serif;color:#2e2e2e;white-space:nowrap;transform:scaleX(0.8068);transform-origin:0 0">CREATE</span>
<span style="position:absolute;left:332.5px;top:129.5px;font:normal 11.8px/1 'Liberation Sans',sans-serif;color:#2e2e2e;white-space:nowrap;transform:scaleX(0.8262);transform-origin:0 0">MODIFY</span>
<span style="position:absolute;left:507.9px;top:129.5px;font:normal 11.8px/1 'Liberation Sans',sans-serif;color:#2e2e2e;white-space:nowrap;transform:scaleX(0.8632);transform-origin:0 0">ASSEMBLE</span>
<span style="position:absolute;left:603.6px;top:129.5px;font:normal 11.8px/1 'Liberation Sans',sans-serif;color:#2e2e2e;white-space:nowrap;transform:scaleX(0.8251);transform-origin:0 0">CONSTRUCT</span>
<span style="position:absolute;left:702.1px;top:129.5px;font:normal 11.8px/1 'Liberation Sans',sans-serif;color:#2e2e2e;white-space:nowrap;transform:scaleX(0.7980);transform-origin:0 0">INSPECT</span>
<span style="position:absolute;left:814.5px;top:129.5px;font:normal 11.8px/1 'Liberation Sans',sans-serif;color:#2e2e2e;white-space:nowrap;transform:scaleX(0.7922);transform-origin:0 0">INSERT</span>
<span style="position:absolute;left:921.4px;top:129.5px;font:normal 11.8px/1 'Liberation Sans',sans-serif;color:#2e2e2e;white-space:nowrap;transform:scaleX(0.8237);transform-origin:0 0">SELECT</span>
<span style="position:absolute;left:30.1px;top:155.5px;font:normal 11.8px/1 'Liberation Sans',sans-serif;color:#4a4a4a;white-space:nowrap;transform:scaleX(0.8515);transform-origin:0 0">BROWSER</span>
<span style="position:absolute;left:104.4px;top:183.5px;font:normal 11.8px/1 'Liberation Sans',sans-serif;color:#2d2d2d;white-space:nowrap;transform:scaleX(0.9299);transform-origin:0 0">(Unsaved)</span>
<span style="position:absolute;left:92.1px;top:208.3px;font:normal 11.8px/1 'Liberation Sans',sans-serif;color:#2d2d2d;white-space:nowrap;transform:scaleX(0.9000);transform-origin:0 0">Document Settings</span>
<span style="position:absolute;left:92.1px;top:232.0px;font:normal 11.8px/1 'Liberation Sans',sans-serif;color:#2d2d2d;white-space:nowrap;transform:scaleX(0.9316);transform-origin:0 0">Named Views</span>
<span style="position:absolute;left:117.4px;top:255.8px;font:normal 11.8px/1 'Liberation Sans',sans-serif;color:#2d2d2d;white-space:nowrap;transform:scaleX(0.8707);transform-origin:0 0">Origin</span>
<span style="position:absolute;left:122.5px;top:279.8px;font:bold 11.8px/1 'Liberation Sans',sans-serif;color:#fff;white-space:nowrap;transform:scaleX(0.8999);transform-origin:0 0">body1:1</span>
<span style="position:absolute;left:972.2px;top:275.8px;font:normal 11.8px/1 'Liberation Sans',sans-serif;color:#4a4a4a;white-space:nowrap;transform:scaleX(0.8036);transform-origin:0 0">EXTRUDE</span>
<span style="position:absolute;left:960.3px;top:303.4px;font:normal 11.8px/1 'Liberation Sans',sans-serif;color:#222;white-space:nowrap;transform:scaleX(0.8798);transform-origin:0 0">Type</span>
<span style="position:absolute;left:960.3px;top:333.3px;font:normal 11.8px/1 'Liberation Sans',sans-serif;color:#222;white-space:nowrap;transform:scaleX(0.8948);transform-origin:0 0">Profiles</span>
<span style="position:absolute;left:960.3px;top:363.3px;font:normal 11.8px/1 'Liberation Sans',sans-serif;color:#222;white-space:nowrap;transform:scaleX(0.9031);transform-origin:0 0">Start</span>
<span style="position:absolute;left:960.3px;top:394.0px;font:normal 11.8px/1 'Liberation Sans',sans-serif;color:#222;white-space:nowrap;transform:scaleX(0.8873);transform-origin:0 0">Direction</span>
<span style="position:absolute;left:960.3px;top:424.0px;font:normal 11.8px/1 'Liberation Sans',sans-serif;color:#222;white-space:nowrap;transform:scaleX(0.8861);transform-origin:0 0">Extent Type</span>
<span style="position:absolute;left:960.3px;top:464.0px;font:normal 11.8px/1 'Liberation Sans',sans-serif;color:#222;white-space:nowrap;transform:scaleX(0.8937);transform-origin:0 0">Operation</span>
<span style="position:absolute;left:1052.8px;top:333.3px;font:normal 11.8px/1 'Liberation Sans',sans-serif;color:#fff;white-space:nowrap;transform:scaleX(0.8997);transform-origin:0 0">Select</span>
<span style="position:absolute;left:1054.2px;top:363.3px;font:normal 11.8px/1 'Liberation Sans',sans-serif;color:#222;white-space:nowrap;transform:scaleX(0.8731);transform-origin:0 0">Profile Plane</span>
<span style="position:absolute;left:1053.9px;top:394.0px;font:normal 11.8px/1 'Liberation Sans',sans-serif;color:#222;white-space:nowrap;transform:scaleX(0.8844);transform-origin:0 0">One Side</span>
<span style="position:absolute;left:1053.9px;top:424.0px;font:normal 11.8px/1 'Liberation Sans',sans-serif;color:#222;white-space:nowrap;transform:scaleX(0.9086);transform-origin:0 0">Distance</span>
<span style="position:absolute;left:1053.9px;top:464.0px;font:normal 11.8px/1 'Liberation Sans',sans-serif;color:#222;white-space:nowrap;transform:scaleX(0.9411);transform-origin:0 0">New Body</span>
<span style="position:absolute;left:1076.3px;top:498.3px;font:normal 12.6px/1 'Liberation Sans',sans-serif;color:#aaa;white-space:nowrap;transform:scaleX(0.9233);transform-origin:0 0">OK</span>
<span style="position:absolute;left:1135.1px;top:498.3px;font:normal 12.6px/1 'Liberation Sans',sans-serif;color:#222;white-space:nowrap;transform:scaleX(0.9795);transform-origin:0 0">Cancel</span>
<span style="position:absolute;left:30.5px;top:965.5px;font:normal 11.8px/1 'Liberation Sans',sans-serif;color:#4a4a4a;white-space:nowrap;transform:scaleX(0.8124);transform-origin:0 0">COMMENTS</span>
<span style="position:absolute;left:551.5px;top:544.8px;font:normal 12.0px/1 'Liberation Serif',serif;color:#000;white-space:nowrap;transform:scaleX(0.9579);transform-origin:0 0">Select sketch profiles or planar faces to extrude</span><div id="frame"></div>
</body></html>
